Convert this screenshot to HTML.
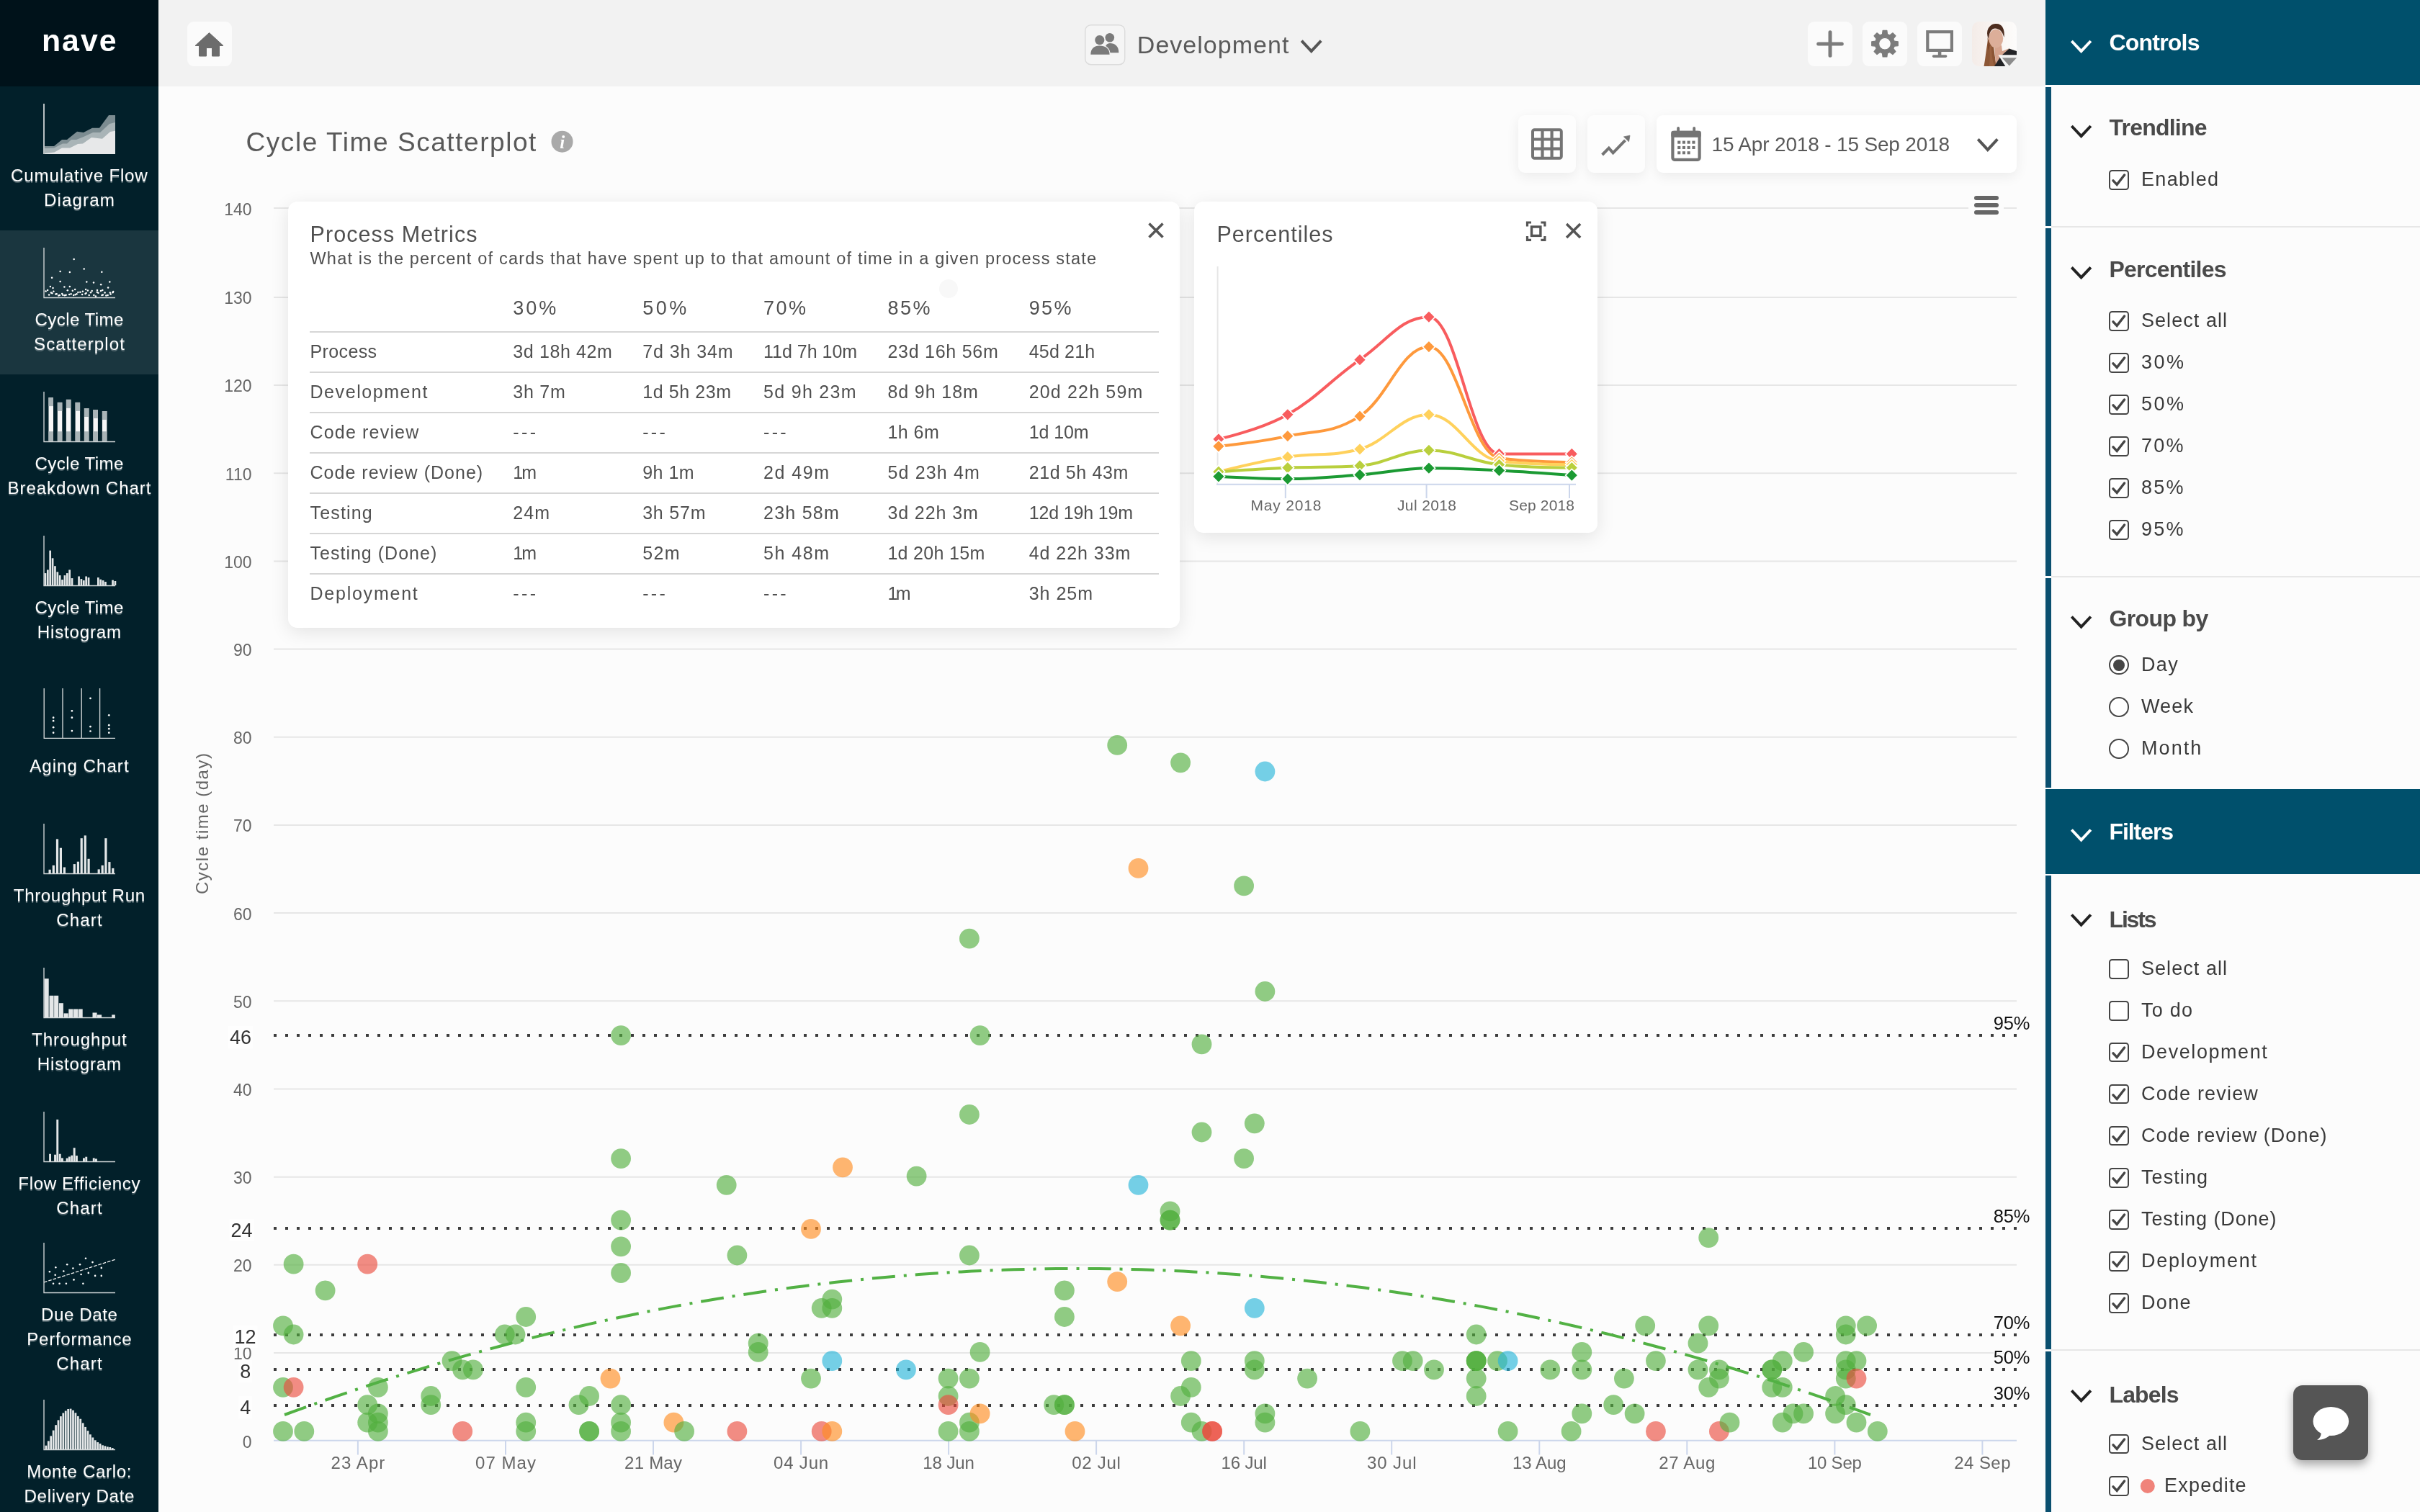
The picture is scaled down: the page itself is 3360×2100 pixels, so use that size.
<!DOCTYPE html><html><head><meta charset="utf-8"><title>Nave - Cycle Time Scatterplot</title><style>html,body{margin:0;padding:0;overflow:hidden}body{width:3360px;height:2100px;overflow:hidden;position:relative;background:#fcfcfc;font-family:"Liberation Sans",sans-serif}div{box-sizing:content-box}@media (max-width:1700px){#root{transform:scale(0.5);transform-origin:0 0}}</style></head><body><div id="root" style="position:absolute;left:0;top:0;width:3360px;height:2100px;will-change:transform">
<svg style="position:absolute;left:0;top:0" width="3360" height="2100" viewBox="0 0 3360 2100" font-family="Liberation Sans, sans-serif"><path d="M380 1879.0H2800M380 1756.8H2800M380 1634.7H2800M380 1512.5H2800M380 1390.3H2800M380 1268.1H2800M380 1145.9H2800M380 1023.8H2800M380 901.6H2800M380 779.4H2800M380 657.2H2800M380 535.0H2800M380 412.9H2800M380 289.0H2800" stroke="#e6e6e6" stroke-width="2" fill="none"/><path d="M380 2000.8H2800M496.9 2000.8V2020.5M702.0 2000.8V2020.5M907.0 2000.8V2020.5M1112.1 2000.8V2020.5M1317.1 2000.8V2020.5M1522.1 2000.8V2020.5M1727.2 2000.8V2020.5M1932.2 2000.8V2020.5M2137.3 2000.8V2020.5M2342.3 2000.8V2020.5M2547.4 2000.8V2020.5M2752.4 2000.8V2020.5" stroke="#ccd6eb" stroke-width="2" fill="none"/><text x="349.5" y="2010.6" font-size="23" fill="#666" text-anchor="end">0</text><text x="349.5" y="1888.4" font-size="23" fill="#666" text-anchor="end">10</text><text x="349.5" y="1766.2" font-size="23" fill="#666" text-anchor="end">20</text><text x="349.5" y="1644.1" font-size="23" fill="#666" text-anchor="end">30</text><text x="349.5" y="1521.9" font-size="23" fill="#666" text-anchor="end">40</text><text x="349.5" y="1399.7" font-size="23" fill="#666" text-anchor="end">50</text><text x="349.5" y="1277.5" font-size="23" fill="#666" text-anchor="end">60</text><text x="349.5" y="1155.3" font-size="23" fill="#666" text-anchor="end">70</text><text x="349.5" y="1033.2" font-size="23" fill="#666" text-anchor="end">80</text><text x="349.5" y="911.0" font-size="23" fill="#666" text-anchor="end">90</text><text x="349.5" y="788.8" font-size="23" fill="#666" text-anchor="end">100</text><text x="349.5" y="666.6" font-size="23" fill="#666" text-anchor="end">110</text><text x="349.5" y="544.4" font-size="23" fill="#666" text-anchor="end">120</text><text x="349.5" y="422.3" font-size="23" fill="#666" text-anchor="end">130</text><text x="349.5" y="298.6" font-size="23" fill="#666" text-anchor="end">140</text><text x="496.9" y="2040.3" font-size="24" fill="#666" text-anchor="middle" textLength="74.9" lengthAdjust="spacing">23 Apr</text><text x="702.0" y="2040.3" font-size="24" fill="#666" text-anchor="middle" textLength="83.9" lengthAdjust="spacing">07 May</text><text x="907.0" y="2040.3" font-size="24" fill="#666" text-anchor="middle" textLength="79.9" lengthAdjust="spacing">21 May</text><text x="1112.1" y="2040.3" font-size="24" fill="#666" text-anchor="middle" textLength="76.2" lengthAdjust="spacing">04 Jun</text><text x="1317.1" y="2040.3" font-size="24" fill="#666" text-anchor="middle" textLength="71.6" lengthAdjust="spacing">18 Jun</text><text x="1522.1" y="2040.3" font-size="24" fill="#666" text-anchor="middle" textLength="67.7" lengthAdjust="spacing">02 Jul</text><text x="1727.2" y="2040.3" font-size="24" fill="#666" text-anchor="middle" textLength="63.4" lengthAdjust="spacing">16 Jul</text><text x="1932.2" y="2040.3" font-size="24" fill="#666" text-anchor="middle" textLength="68.6" lengthAdjust="spacing">30 Jul</text><text x="2137.3" y="2040.3" font-size="24" fill="#666" text-anchor="middle" textLength="74.6" lengthAdjust="spacing">13 Aug</text><text x="2342.3" y="2040.3" font-size="24" fill="#666" text-anchor="middle" textLength="78.2" lengthAdjust="spacing">27 Aug</text><text x="2547.4" y="2040.3" font-size="24" fill="#666" text-anchor="middle" textLength="74.9" lengthAdjust="spacing">10 Sep</text><text x="2752.4" y="2040.3" font-size="24" fill="#666" text-anchor="middle" textLength="78.2" lengthAdjust="spacing">24 Sep</text><text transform="translate(288.5 1144) rotate(-90)" font-size="24" fill="#666" text-anchor="middle" textLength="196" lengthAdjust="spacing">Cycle time (day)</text><path d="M380 1438H2801" stroke="#3d3d3d" stroke-width="4" stroke-dasharray="4 12" fill="none"/><path d="M380 1706H2801" stroke="#3d3d3d" stroke-width="4" stroke-dasharray="4 12" fill="none"/><path d="M380 1854H2801" stroke="#3d3d3d" stroke-width="4" stroke-dasharray="4 12" fill="none"/><path d="M380 1902H2801" stroke="#3d3d3d" stroke-width="4" stroke-dasharray="4 12" fill="none"/><path d="M380 1952H2801" stroke="#3d3d3d" stroke-width="4" stroke-dasharray="4 12" fill="none"/><rect x="317.0" y="1425" width="34.0" height="31" fill="#fff" opacity="0.75"/><text x="334.0" y="1450.4" font-size="27" fill="#333" text-anchor="middle">46</text><text x="2818.5" y="1430.2" font-size="25.5" fill="#111" text-anchor="end" textLength="50.8" lengthAdjust="spacing" stroke="#fcfcfc" stroke-width="3" paint-order="stroke" stroke-linejoin="round">95%</text><rect x="318.6" y="1693" width="34.0" height="31" fill="#fff" opacity="0.75"/><text x="335.6" y="1718.4" font-size="27" fill="#333" text-anchor="middle">24</text><text x="2818.5" y="1698.2" font-size="25.5" fill="#111" text-anchor="end" textLength="50.8" lengthAdjust="spacing" stroke="#fcfcfc" stroke-width="3" paint-order="stroke" stroke-linejoin="round">85%</text><rect x="323.6" y="1841" width="34.0" height="31" fill="#fff" opacity="0.75"/><text x="340.6" y="1866.4" font-size="27" fill="#333" text-anchor="middle">12</text><text x="2818.5" y="1846.2" font-size="25.5" fill="#111" text-anchor="end" textLength="50.8" lengthAdjust="spacing" stroke="#fcfcfc" stroke-width="3" paint-order="stroke" stroke-linejoin="round">70%</text><rect x="331.3" y="1889" width="19.0" height="31" fill="#fff" opacity="0.75"/><text x="340.8" y="1914.4" font-size="27" fill="#333" text-anchor="middle">8</text><text x="2818.5" y="1894.2" font-size="25.5" fill="#111" text-anchor="end" textLength="50.8" lengthAdjust="spacing" stroke="#fcfcfc" stroke-width="3" paint-order="stroke" stroke-linejoin="round">50%</text><rect x="331.3" y="1939" width="19.0" height="31" fill="#fff" opacity="0.75"/><text x="340.8" y="1964.4" font-size="27" fill="#333" text-anchor="middle">4</text><text x="2818.5" y="1944.2" font-size="25.5" fill="#111" text-anchor="end" textLength="50.8" lengthAdjust="spacing" stroke="#fcfcfc" stroke-width="3" paint-order="stroke" stroke-linejoin="round">30%</text><circle cx="862.1" cy="1438.1" r="13.9" fill="#50ae3c" fill-opacity="0.63"/><circle cx="862.1" cy="1609.1" r="13.9" fill="#50ae3c" fill-opacity="0.63"/><circle cx="1008.7" cy="1645.8" r="13.9" fill="#50ae3c" fill-opacity="0.63"/><circle cx="862.1" cy="1694.6" r="13.9" fill="#50ae3c" fill-opacity="0.63"/><circle cx="862.1" cy="1731.3" r="13.9" fill="#50ae3c" fill-opacity="0.63"/><circle cx="1023.4" cy="1743.5" r="13.9" fill="#50ae3c" fill-opacity="0.63"/><circle cx="1756.4" cy="1377.0" r="13.9" fill="#50ae3c" fill-opacity="0.63"/><circle cx="1360.6" cy="1438.1" r="13.9" fill="#50ae3c" fill-opacity="0.63"/><circle cx="1668.5" cy="1450.3" r="13.9" fill="#50ae3c" fill-opacity="0.63"/><circle cx="1345.9" cy="1548.0" r="13.9" fill="#50ae3c" fill-opacity="0.63"/><circle cx="1741.8" cy="1560.3" r="13.9" fill="#50ae3c" fill-opacity="0.63"/><circle cx="1668.5" cy="1572.5" r="13.9" fill="#50ae3c" fill-opacity="0.63"/><circle cx="1727.1" cy="1609.1" r="13.9" fill="#50ae3c" fill-opacity="0.63"/><circle cx="1170.0" cy="1621.3" r="13.9" fill="#ff8c1e" fill-opacity="0.63"/><circle cx="1272.6" cy="1633.6" r="13.9" fill="#50ae3c" fill-opacity="0.63"/><circle cx="1580.5" cy="1645.8" r="13.9" fill="#25b4d9" fill-opacity="0.63"/><circle cx="1624.5" cy="1682.4" r="13.9" fill="#50ae3c" fill-opacity="0.63"/><circle cx="1624.5" cy="1694.6" r="13.9" fill="#50ae3c" fill-opacity="0.63"/><circle cx="1624.5" cy="1694.6" r="13.9" fill="#50ae3c" fill-opacity="0.63"/><circle cx="1126.0" cy="1706.9" r="13.9" fill="#ff8c1e" fill-opacity="0.63"/><circle cx="1345.9" cy="1743.5" r="13.9" fill="#50ae3c" fill-opacity="0.63"/><circle cx="2372.2" cy="1719.1" r="13.9" fill="#50ae3c" fill-opacity="0.63"/><circle cx="1551.2" cy="1034.9" r="13.9" fill="#50ae3c" fill-opacity="0.63"/><circle cx="1639.1" cy="1059.3" r="13.9" fill="#50ae3c" fill-opacity="0.63"/><circle cx="1756.4" cy="1071.5" r="13.9" fill="#25b4d9" fill-opacity="0.63"/><circle cx="1580.5" cy="1205.9" r="13.9" fill="#ff8c1e" fill-opacity="0.63"/><circle cx="1727.1" cy="1230.4" r="13.9" fill="#50ae3c" fill-opacity="0.63"/><circle cx="1345.9" cy="1303.7" r="13.9" fill="#50ae3c" fill-opacity="0.63"/><circle cx="407.6" cy="1755.7" r="13.9" fill="#50ae3c" fill-opacity="0.63"/><circle cx="510.2" cy="1755.7" r="13.9" fill="#eb4b3c" fill-opacity="0.63"/><circle cx="451.6" cy="1792.4" r="13.9" fill="#50ae3c" fill-opacity="0.63"/><circle cx="862.1" cy="1768.0" r="13.9" fill="#50ae3c" fill-opacity="0.63"/><circle cx="393.0" cy="1841.3" r="13.9" fill="#50ae3c" fill-opacity="0.63"/><circle cx="407.6" cy="1853.5" r="13.9" fill="#50ae3c" fill-opacity="0.63"/><circle cx="730.2" cy="1829.0" r="13.9" fill="#50ae3c" fill-opacity="0.63"/><circle cx="700.8" cy="1853.5" r="13.9" fill="#50ae3c" fill-opacity="0.63"/><circle cx="715.5" cy="1853.5" r="13.9" fill="#50ae3c" fill-opacity="0.63"/><circle cx="627.5" cy="1890.1" r="13.9" fill="#50ae3c" fill-opacity="0.63"/><circle cx="642.2" cy="1902.4" r="13.9" fill="#50ae3c" fill-opacity="0.63"/><circle cx="656.9" cy="1902.4" r="13.9" fill="#50ae3c" fill-opacity="0.63"/><circle cx="393.0" cy="1926.8" r="13.9" fill="#50ae3c" fill-opacity="0.63"/><circle cx="407.6" cy="1926.8" r="13.9" fill="#eb4b3c" fill-opacity="0.63"/><circle cx="524.9" cy="1926.8" r="13.9" fill="#50ae3c" fill-opacity="0.63"/><circle cx="730.2" cy="1926.8" r="13.9" fill="#50ae3c" fill-opacity="0.63"/><circle cx="847.5" cy="1914.6" r="13.9" fill="#ff8c1e" fill-opacity="0.63"/><circle cx="598.2" cy="1939.0" r="13.9" fill="#50ae3c" fill-opacity="0.63"/><circle cx="598.2" cy="1951.2" r="13.9" fill="#50ae3c" fill-opacity="0.63"/><circle cx="818.1" cy="1939.0" r="13.9" fill="#50ae3c" fill-opacity="0.63"/><circle cx="803.5" cy="1951.2" r="13.9" fill="#50ae3c" fill-opacity="0.63"/><circle cx="862.1" cy="1951.2" r="13.9" fill="#50ae3c" fill-opacity="0.63"/><circle cx="510.2" cy="1951.2" r="13.9" fill="#50ae3c" fill-opacity="0.63"/><circle cx="524.9" cy="1963.4" r="13.9" fill="#50ae3c" fill-opacity="0.63"/><circle cx="510.2" cy="1975.7" r="13.9" fill="#50ae3c" fill-opacity="0.63"/><circle cx="524.9" cy="1975.7" r="13.9" fill="#50ae3c" fill-opacity="0.63"/><circle cx="524.9" cy="1987.9" r="13.9" fill="#50ae3c" fill-opacity="0.63"/><circle cx="393.0" cy="1987.9" r="13.9" fill="#50ae3c" fill-opacity="0.63"/><circle cx="422.3" cy="1987.9" r="13.9" fill="#50ae3c" fill-opacity="0.63"/><circle cx="642.2" cy="1987.9" r="13.9" fill="#eb4b3c" fill-opacity="0.63"/><circle cx="730.2" cy="1975.7" r="13.9" fill="#50ae3c" fill-opacity="0.63"/><circle cx="730.2" cy="1987.9" r="13.9" fill="#50ae3c" fill-opacity="0.63"/><circle cx="818.1" cy="1987.9" r="13.9" fill="#50ae3c" fill-opacity="0.63"/><circle cx="818.1" cy="1987.9" r="13.9" fill="#50ae3c" fill-opacity="0.63"/><circle cx="862.1" cy="1975.7" r="13.9" fill="#50ae3c" fill-opacity="0.63"/><circle cx="862.1" cy="1987.9" r="13.9" fill="#50ae3c" fill-opacity="0.63"/><circle cx="935.4" cy="1975.7" r="13.9" fill="#ff8c1e" fill-opacity="0.63"/><circle cx="950.1" cy="1987.9" r="13.9" fill="#50ae3c" fill-opacity="0.63"/><circle cx="1023.4" cy="1987.9" r="13.9" fill="#eb4b3c" fill-opacity="0.63"/><circle cx="1052.7" cy="1865.7" r="13.9" fill="#50ae3c" fill-opacity="0.63"/><circle cx="1052.7" cy="1877.9" r="13.9" fill="#50ae3c" fill-opacity="0.63"/><circle cx="1155.3" cy="1804.6" r="13.9" fill="#50ae3c" fill-opacity="0.63"/><circle cx="1140.7" cy="1816.8" r="13.9" fill="#50ae3c" fill-opacity="0.63"/><circle cx="1155.3" cy="1816.8" r="13.9" fill="#50ae3c" fill-opacity="0.63"/><circle cx="1155.3" cy="1890.1" r="13.9" fill="#25b4d9" fill-opacity="0.63"/><circle cx="1126.0" cy="1914.6" r="13.9" fill="#50ae3c" fill-opacity="0.63"/><circle cx="1258.0" cy="1902.4" r="13.9" fill="#25b4d9" fill-opacity="0.63"/><circle cx="1140.7" cy="1987.9" r="13.9" fill="#eb4b3c" fill-opacity="0.63"/><circle cx="1155.3" cy="1987.9" r="13.9" fill="#ff8c1e" fill-opacity="0.63"/><circle cx="1316.6" cy="1914.6" r="13.9" fill="#50ae3c" fill-opacity="0.63"/><circle cx="1316.6" cy="1939.0" r="13.9" fill="#50ae3c" fill-opacity="0.63"/><circle cx="1316.6" cy="1951.2" r="13.9" fill="#eb4b3c" fill-opacity="0.63"/><circle cx="1316.6" cy="1987.9" r="13.9" fill="#50ae3c" fill-opacity="0.63"/><circle cx="1345.9" cy="1914.6" r="13.9" fill="#50ae3c" fill-opacity="0.63"/><circle cx="1360.6" cy="1877.9" r="13.9" fill="#50ae3c" fill-opacity="0.63"/><circle cx="1345.9" cy="1975.7" r="13.9" fill="#50ae3c" fill-opacity="0.63"/><circle cx="1360.6" cy="1963.4" r="13.9" fill="#ff8c1e" fill-opacity="0.63"/><circle cx="1345.9" cy="1987.9" r="13.9" fill="#50ae3c" fill-opacity="0.63"/><circle cx="1477.9" cy="1792.4" r="13.9" fill="#50ae3c" fill-opacity="0.63"/><circle cx="1477.9" cy="1829.0" r="13.9" fill="#50ae3c" fill-opacity="0.63"/><circle cx="1551.2" cy="1780.2" r="13.9" fill="#ff8c1e" fill-opacity="0.63"/><circle cx="1463.2" cy="1951.2" r="13.9" fill="#50ae3c" fill-opacity="0.63"/><circle cx="1477.9" cy="1951.2" r="13.9" fill="#50ae3c" fill-opacity="0.63"/><circle cx="1477.9" cy="1951.2" r="13.9" fill="#50ae3c" fill-opacity="0.63"/><circle cx="1492.5" cy="1987.9" r="13.9" fill="#ff8c1e" fill-opacity="0.63"/><circle cx="1639.1" cy="1841.3" r="13.9" fill="#ff8c1e" fill-opacity="0.63"/><circle cx="1653.8" cy="1890.1" r="13.9" fill="#50ae3c" fill-opacity="0.63"/><circle cx="1653.8" cy="1926.8" r="13.9" fill="#50ae3c" fill-opacity="0.63"/><circle cx="1639.1" cy="1939.0" r="13.9" fill="#50ae3c" fill-opacity="0.63"/><circle cx="1653.8" cy="1975.7" r="13.9" fill="#50ae3c" fill-opacity="0.63"/><circle cx="1668.5" cy="1987.9" r="13.9" fill="#50ae3c" fill-opacity="0.63"/><circle cx="1683.1" cy="1987.9" r="13.9" fill="#eb4b3c" fill-opacity="0.63"/><circle cx="1683.1" cy="1987.9" r="13.9" fill="#eb4b3c" fill-opacity="0.63"/><circle cx="1741.8" cy="1816.8" r="13.9" fill="#25b4d9" fill-opacity="0.63"/><circle cx="1741.8" cy="1890.1" r="13.9" fill="#50ae3c" fill-opacity="0.63"/><circle cx="1741.8" cy="1902.4" r="13.9" fill="#50ae3c" fill-opacity="0.63"/><circle cx="1756.4" cy="1963.4" r="13.9" fill="#50ae3c" fill-opacity="0.63"/><circle cx="1756.4" cy="1975.7" r="13.9" fill="#50ae3c" fill-opacity="0.63"/><circle cx="1815.1" cy="1914.6" r="13.9" fill="#50ae3c" fill-opacity="0.63"/><circle cx="1888.4" cy="1987.9" r="13.9" fill="#50ae3c" fill-opacity="0.63"/><circle cx="1947.0" cy="1890.1" r="13.9" fill="#50ae3c" fill-opacity="0.63"/><circle cx="1961.7" cy="1890.1" r="13.9" fill="#50ae3c" fill-opacity="0.63"/><circle cx="1991.0" cy="1902.4" r="13.9" fill="#50ae3c" fill-opacity="0.63"/><circle cx="2049.7" cy="1853.5" r="13.9" fill="#50ae3c" fill-opacity="0.63"/><circle cx="2049.7" cy="1890.1" r="13.9" fill="#50ae3c" fill-opacity="0.63"/><circle cx="2049.7" cy="1890.1" r="13.9" fill="#50ae3c" fill-opacity="0.63"/><circle cx="2049.7" cy="1890.1" r="13.9" fill="#50ae3c" fill-opacity="0.63"/><circle cx="2049.7" cy="1914.6" r="13.9" fill="#50ae3c" fill-opacity="0.63"/><circle cx="2049.7" cy="1939.0" r="13.9" fill="#50ae3c" fill-opacity="0.63"/><circle cx="2079.0" cy="1890.1" r="13.9" fill="#50ae3c" fill-opacity="0.63"/><circle cx="2093.6" cy="1890.1" r="13.9" fill="#25b4d9" fill-opacity="0.63"/><circle cx="2093.6" cy="1987.9" r="13.9" fill="#50ae3c" fill-opacity="0.63"/><circle cx="2152.3" cy="1902.4" r="13.9" fill="#50ae3c" fill-opacity="0.63"/><circle cx="2196.3" cy="1877.9" r="13.9" fill="#50ae3c" fill-opacity="0.63"/><circle cx="2196.3" cy="1902.4" r="13.9" fill="#50ae3c" fill-opacity="0.63"/><circle cx="2196.3" cy="1963.4" r="13.9" fill="#50ae3c" fill-opacity="0.63"/><circle cx="2181.6" cy="1987.9" r="13.9" fill="#50ae3c" fill-opacity="0.63"/><circle cx="2240.2" cy="1951.2" r="13.9" fill="#50ae3c" fill-opacity="0.63"/><circle cx="2254.9" cy="1914.6" r="13.9" fill="#50ae3c" fill-opacity="0.63"/><circle cx="2269.6" cy="1963.4" r="13.9" fill="#50ae3c" fill-opacity="0.63"/><circle cx="2284.2" cy="1841.3" r="13.9" fill="#50ae3c" fill-opacity="0.63"/><circle cx="2298.9" cy="1890.1" r="13.9" fill="#50ae3c" fill-opacity="0.63"/><circle cx="2298.9" cy="1987.9" r="13.9" fill="#eb4b3c" fill-opacity="0.63"/><circle cx="2357.5" cy="1865.7" r="13.9" fill="#50ae3c" fill-opacity="0.63"/><circle cx="2357.5" cy="1902.4" r="13.9" fill="#50ae3c" fill-opacity="0.63"/><circle cx="2372.2" cy="1841.3" r="13.9" fill="#50ae3c" fill-opacity="0.63"/><circle cx="2372.2" cy="1926.8" r="13.9" fill="#50ae3c" fill-opacity="0.63"/><circle cx="2386.9" cy="1902.4" r="13.9" fill="#50ae3c" fill-opacity="0.63"/><circle cx="2386.9" cy="1914.6" r="13.9" fill="#50ae3c" fill-opacity="0.63"/><circle cx="2386.9" cy="1987.9" r="13.9" fill="#eb4b3c" fill-opacity="0.63"/><circle cx="2401.5" cy="1975.7" r="13.9" fill="#50ae3c" fill-opacity="0.63"/><circle cx="2460.2" cy="1902.4" r="13.9" fill="#50ae3c" fill-opacity="0.63"/><circle cx="2460.2" cy="1902.4" r="13.9" fill="#50ae3c" fill-opacity="0.63"/><circle cx="2460.2" cy="1926.8" r="13.9" fill="#50ae3c" fill-opacity="0.63"/><circle cx="2474.8" cy="1890.1" r="13.9" fill="#50ae3c" fill-opacity="0.63"/><circle cx="2474.8" cy="1926.8" r="13.9" fill="#50ae3c" fill-opacity="0.63"/><circle cx="2474.8" cy="1975.7" r="13.9" fill="#50ae3c" fill-opacity="0.63"/><circle cx="2489.5" cy="1963.4" r="13.9" fill="#50ae3c" fill-opacity="0.63"/><circle cx="2504.1" cy="1877.9" r="13.9" fill="#50ae3c" fill-opacity="0.63"/><circle cx="2504.1" cy="1963.4" r="13.9" fill="#50ae3c" fill-opacity="0.63"/><circle cx="2548.1" cy="1939.0" r="13.9" fill="#50ae3c" fill-opacity="0.63"/><circle cx="2548.1" cy="1963.4" r="13.9" fill="#50ae3c" fill-opacity="0.63"/><circle cx="2562.8" cy="1841.3" r="13.9" fill="#50ae3c" fill-opacity="0.63"/><circle cx="2562.8" cy="1853.5" r="13.9" fill="#50ae3c" fill-opacity="0.63"/><circle cx="2562.8" cy="1890.1" r="13.9" fill="#50ae3c" fill-opacity="0.63"/><circle cx="2562.8" cy="1902.4" r="13.9" fill="#50ae3c" fill-opacity="0.63"/><circle cx="2562.8" cy="1914.6" r="13.9" fill="#50ae3c" fill-opacity="0.63"/><circle cx="2562.8" cy="1951.2" r="13.9" fill="#50ae3c" fill-opacity="0.63"/><circle cx="2577.5" cy="1890.1" r="13.9" fill="#50ae3c" fill-opacity="0.63"/><circle cx="2577.5" cy="1914.6" r="13.9" fill="#eb4b3c" fill-opacity="0.63"/><circle cx="2577.5" cy="1975.7" r="13.9" fill="#50ae3c" fill-opacity="0.63"/><circle cx="2592.1" cy="1841.3" r="13.9" fill="#50ae3c" fill-opacity="0.63"/><circle cx="2606.8" cy="1987.9" r="13.9" fill="#50ae3c" fill-opacity="0.63"/><path d="M395.0 1965.0 L409.7 1959.7 L424.4 1954.4 L439.0 1949.1 L453.7 1944.0 L468.4 1938.9 L483.1 1933.9 L497.8 1928.9 L512.4 1924.0 L527.1 1919.2 L541.8 1914.5 L556.5 1909.9 L571.2 1905.3 L585.8 1900.8 L600.5 1896.3 L615.2 1891.9 L629.9 1887.7 L644.6 1883.4 L659.2 1879.3 L673.9 1875.2 L688.6 1871.2 L703.3 1867.3 L718.0 1863.4 L732.6 1859.6 L747.3 1855.9 L762.0 1852.2 L776.7 1848.7 L791.4 1845.2 L806.0 1841.7 L820.7 1838.4 L835.4 1835.1 L850.1 1831.9 L864.8 1828.7 L879.4 1825.7 L894.1 1822.7 L908.8 1819.8 L923.5 1816.9 L938.2 1814.1 L952.8 1811.4 L967.5 1808.8 L982.2 1806.2 L996.9 1803.7 L1011.6 1801.3 L1026.2 1799.0 L1040.9 1796.7 L1055.6 1794.5 L1070.3 1792.4 L1085.0 1790.3 L1099.6 1788.3 L1114.3 1786.4 L1129.0 1784.6 L1143.7 1782.8 L1158.4 1781.1 L1173.0 1779.5 L1187.7 1777.9 L1202.4 1776.4 L1217.1 1775.0 L1231.8 1773.7 L1246.4 1772.4 L1261.1 1771.2 L1275.8 1770.1 L1290.5 1769.1 L1305.2 1768.1 L1319.8 1767.2 L1334.5 1766.4 L1349.2 1765.6 L1363.9 1764.9 L1378.6 1764.3 L1393.2 1763.8 L1407.9 1763.3 L1422.6 1762.9 L1437.3 1762.6 L1452.0 1762.3 L1466.6 1762.1 L1481.3 1762.0 L1496.0 1762.0 L1510.7 1762.0 L1525.4 1762.1 L1540.0 1762.3 L1554.7 1762.6 L1569.4 1762.9 L1584.1 1763.3 L1598.8 1763.8 L1613.4 1764.3 L1628.1 1764.9 L1642.8 1765.6 L1657.5 1766.4 L1672.2 1767.2 L1686.8 1768.1 L1701.5 1769.1 L1716.2 1770.1 L1730.9 1771.2 L1745.6 1772.4 L1760.2 1773.7 L1774.9 1775.0 L1789.6 1776.4 L1804.3 1777.9 L1819.0 1779.5 L1833.6 1781.1 L1848.3 1782.8 L1863.0 1784.6 L1877.7 1786.4 L1892.4 1788.3 L1907.0 1790.3 L1921.7 1792.4 L1936.4 1794.5 L1951.1 1796.7 L1965.8 1799.0 L1980.4 1801.3 L1995.1 1803.7 L2009.8 1806.2 L2024.5 1808.8 L2039.2 1811.4 L2053.8 1814.1 L2068.5 1816.9 L2083.2 1819.8 L2097.9 1822.7 L2112.6 1825.7 L2127.2 1828.7 L2141.9 1831.9 L2156.6 1835.1 L2171.3 1838.4 L2186.0 1841.7 L2200.6 1845.2 L2215.3 1848.7 L2230.0 1852.2 L2244.7 1855.9 L2259.4 1859.6 L2274.0 1863.4 L2288.7 1867.3 L2303.4 1871.2 L2318.1 1875.2 L2332.8 1879.3 L2347.4 1883.4 L2362.1 1887.7 L2376.8 1891.9 L2391.5 1896.3 L2406.2 1900.8 L2420.8 1905.3 L2435.5 1909.9 L2450.2 1914.5 L2464.9 1919.2 L2479.6 1924.0 L2494.2 1928.9 L2508.9 1933.9 L2523.6 1938.9 L2538.3 1944.0 L2553.0 1949.1 L2567.6 1954.4 L2582.3 1959.7 L2597.0 1965.0" stroke="#52b144" stroke-width="4" stroke-dasharray="32 12 4 12" fill="none"/></svg>
<div style="position:absolute;left:220px;top:0px;width:2620px;height:120px;background:#f2f2f2"></div><div style="position:absolute;left:260px;top:30px;width:62px;height:62px;background:#fbfbfb;border-radius:9px;"></div><div style="position:absolute;left:2510px;top:30px;width:62px;height:62px;background:#fbfbfb;border-radius:9px;"></div><div style="position:absolute;left:2586px;top:30px;width:62px;height:62px;background:#fbfbfb;border-radius:9px;"></div><div style="position:absolute;left:2662px;top:30px;width:62px;height:62px;background:#fbfbfb;border-radius:9px;"></div><div style="position:absolute;left:2738px;top:30px;width:62px;height:62px;border-radius:10px;overflow:hidden;background:#f6f0ed"><svg width="62" height="62" viewBox="0 0 62 62"><defs><linearGradient id="avbg" x1="0" x2="1" y1="0" y2="0"><stop offset="0" stop-color="#f4ece8"/><stop offset="1" stop-color="#fdfcfb"/></linearGradient></defs><rect width="62" height="62" fill="url(#avbg)"/><path d="M23 22 C20 34 19 50 16.5 62 L34 62 C32 52 31 42 30 34Z" fill="#8c5635"/><path d="M31 34 L41 33 L42 41 L52 37 L40 49 L33 60 Z" fill="#d6a48e"/><ellipse cx="33.2" cy="23.5" rx="10" ry="13" fill="#dcae99"/><path d="M21.5 20 C19 8 28 2 34 3 C42 3 46 11 44.5 22 C42 13 38 10 32 9.5 C27 10 24 14 23 24Z" fill="#4d2c1e"/><path d="M21.5 18 C22 26 23 30 25 34 L22 40 Z" fill="#7a4528"/><path d="M31 62 L39.7 48.2 L51.6 37.6 L62 41 L62 62Z" fill="#222326"/><path d="M27 34 C27 44 28 54 31 62 L24 62 C25 52 25 42 24.5 34Z" fill="#9a6240"/></svg></div><svg style="position:absolute;left:2738px;top:30px" width="62" height="62" viewBox="0 0 62 62"><path d="M36.4 46.2 L62 46.2 L62 62 L46.3 62Z" fill="#f3f3f3"/><path d="M41.7 50.2 L62 50.2 L51.8 61.4Z" fill="#8c8c8c"/></svg><div style="position:absolute;top:45.1px;font-size:34px;line-height:1;color:#5a5a5a;white-space:nowrap;letter-spacing:1.03px;left:1578.8px;">Development</div><svg style="position:absolute;left:0;top:0" width="3360" height="260" viewBox="0 0 3360 260"><path d="M290.5 45.5 L310 63.5 L304.5 63.5 L304.5 78 L294.5 78 L294.5 66.5 L286.5 66.5 L286.5 78 L276.5 78 L276.5 63.5 L271 63.5 Z" fill="#6c6c6c" stroke="#6c6c6c" stroke-width="1" stroke-linejoin="round"/><rect x="1506.7" y="34.7" width="55" height="55" rx="8" fill="#f5f5f5" stroke="#dcdcdc" stroke-width="1.5"/><circle cx="1540.8" cy="52.3" r="6.3" fill="#7b7b7b"/><path d="M1533.5 73.2 C1533.5 63 1537 60 1541 60 C1548 60 1553.3 64 1553.3 73.2Z" fill="#7b7b7b"/><circle cx="1526.8" cy="55.6" r="7.6" fill="#f5f5f5"/><path d="M1513 77 C1513 66 1519 62 1527 62 C1535 62 1541.8 66 1541.8 77Z" fill="#f5f5f5"/><circle cx="1526.8" cy="55.6" r="6.6" fill="#7b7b7b"/><path d="M1514.3 75.8 C1514.3 67 1520 63.6 1527 63.6 C1534 63.6 1540.6 67 1540.6 75.8Z" fill="#7b7b7b"/><path d="M1807.2 56.55 L1820.7 71.05 L1834.2 56.55" fill="none" stroke="#555" stroke-width="4" stroke-linecap="butt" stroke-linejoin="miter"/><path d="M2524.7 61 H2557.3 M2541 44.7 V77.3" stroke="#7c7c7c" stroke-width="5" stroke-linecap="round"/><path d="M2613.44 47.57 L2614.14 42.42 L2619.86 42.42 L2620.56 47.57 L2623.76 48.90 L2627.91 45.76 L2631.94 49.79 L2628.80 53.94 L2630.13 57.14 L2635.28 57.84 L2635.28 63.56 L2630.13 64.26 L2628.80 67.46 L2631.94 71.61 L2627.91 75.64 L2623.76 72.50 L2620.56 73.83 L2619.86 78.98 L2614.14 78.98 L2613.44 73.83 L2610.24 72.50 L2606.09 75.64 L2602.06 71.61 L2605.20 67.46 L2603.87 64.26 L2598.72 63.56 L2598.72 57.84 L2603.87 57.14 L2605.20 53.94 L2602.06 49.79 L2606.09 45.76 L2610.24 48.90Z M2608.6 60.7 a8.4 8.4 0 1 0 16.8 0 a8.4 8.4 0 1 0 -16.8 0Z" fill="#7c7c7c" fill-rule="evenodd" stroke="#7c7c7c" stroke-width="1.2" stroke-linejoin="round"/><rect x="2676.3" y="44.2" width="33.6" height="25.7" fill="none" stroke="#7c7c7c" stroke-width="4.2"/><path d="M2693.1 71 V77" stroke="#7c7c7c" stroke-width="4.5" fill="none"/><rect x="2682.8" y="76.2" width="20.6" height="3.7" rx="1.8" fill="#7c7c7c"/></svg>
<div style="position:absolute;left:2108px;top:160px;width:80px;height:80px;background:#fdfdfd;border-radius:9px;box-shadow:0 5px 18px rgba(0,0,0,0.07);"></div><div style="position:absolute;left:2204px;top:160px;width:80px;height:80px;background:#fdfdfd;border-radius:9px;box-shadow:0 5px 18px rgba(0,0,0,0.07);"></div><div style="position:absolute;left:2300px;top:160px;width:500px;height:80px;background:#fff;border-radius:9px;box-shadow:0 5px 18px rgba(0,0,0,0.07);"></div><div style="position:absolute;top:178.7px;font-size:37px;line-height:1;color:#595959;white-space:nowrap;letter-spacing:1.56px;left:341.5px;">Cycle Time Scatterplot</div><div style="position:absolute;top:186.9px;font-size:28px;line-height:1;color:#595959;white-space:nowrap;letter-spacing:-0.17px;left:2376.5px;">15 Apr 2018 - 15 Sep 2018</div><svg style="position:absolute;left:0;top:0" width="3360" height="300" viewBox="0 0 3360 300"><circle cx="780.5" cy="196.7" r="15" fill="#a9a9a9"/><text x="780.7" y="205.5" font-family="Liberation Serif" font-style="italic" font-weight="bold" font-size="25" fill="#fff" text-anchor="middle">i</text><rect x="2128" y="180.2" width="39.8" height="39.6" rx="2.5" fill="none" stroke="#747474" stroke-width="4"/><path d="M2141.5 180 V220 M2154.6 180 V220 M2128 193.5 H2168 M2128 206.7 H2168" stroke="#747474" stroke-width="4.2"/><path d="M2224.6 215 L2233.8 205.6 L2239.6 212.3 L2256.5 194.8" fill="none" stroke="#747474" stroke-width="4" stroke-linejoin="miter"/><path d="M2263 188.2 L2254.5 189.9 L2261.5 196.8 Z" fill="#747474" stroke="#747474" stroke-width="0.8" stroke-linejoin="round"/><rect x="2322.4" y="183.8" width="37.2" height="38" rx="2.5" fill="none" stroke="#747474" stroke-width="4.2"/><rect x="2320.3" y="181.7" width="41.5" height="9" rx="2.5" fill="#747474"/><path d="M2330.1 178 V185 M2352.2 178 V185" stroke="#747474" stroke-width="3.8" stroke-linecap="round"/><rect x="2329.2" y="195.6" width="4.1" height="4.1" fill="#747474"/><rect x="2335.9" y="195.6" width="4.1" height="4.1" fill="#747474"/><rect x="2342.6" y="195.6" width="4.1" height="4.1" fill="#747474"/><rect x="2349.4" y="195.6" width="4.1" height="4.1" fill="#747474"/><rect x="2329.2" y="202.9" width="4.1" height="4.1" fill="#747474"/><rect x="2335.9" y="202.9" width="4.1" height="4.1" fill="#747474"/><rect x="2342.6" y="202.9" width="4.1" height="4.1" fill="#747474"/><rect x="2349.4" y="202.9" width="4.1" height="4.1" fill="#747474"/><rect x="2329.2" y="210.2" width="4.1" height="4.1" fill="#747474"/><rect x="2335.9" y="210.2" width="4.1" height="4.1" fill="#747474"/><rect x="2342.6" y="210.2" width="4.1" height="4.1" fill="#747474"/><path d="M2746.3 193.45 L2759.8 207.95 L2773.3 193.45" fill="none" stroke="#555" stroke-width="4" stroke-linecap="butt" stroke-linejoin="miter"/><rect x="2733" y="268" width="49" height="34" fill="#fcfcfc"/><rect x="2741" y="272.1" width="34" height="6" rx="3" fill="#666"/><rect x="2741" y="282" width="34" height="6" rx="3" fill="#666"/><rect x="2741" y="292" width="34" height="6" rx="3" fill="#666"/></svg>
<div style="position:absolute;left:400px;top:280px;width:1238px;height:592px;background:#fff;border-radius:13px;box-shadow:0 6px 26px rgba(0,0,0,0.10)"></div><div style="position:absolute;left:1303.5px;top:387.5px;width:26px;height:26px;border-radius:50%;background:#f8f8f8"></div><div style="position:absolute;top:309.8px;font-size:30.5px;line-height:1;color:#505050;white-space:nowrap;letter-spacing:1.08px;left:430.5px;">Process Metrics</div><div style="position:absolute;top:348.1px;font-size:23.5px;line-height:1;color:#505050;white-space:nowrap;letter-spacing:1.19px;left:430.5px;">What is the percent of cards that have spent up to that amount of time in a given process state</div><div style="position:absolute;top:415.1px;font-size:27px;line-height:1;color:#505050;white-space:nowrap;letter-spacing:2.98px;left:712.3px;">30%</div><div style="position:absolute;top:415.1px;font-size:27px;line-height:1;color:#505050;white-space:nowrap;letter-spacing:3.48px;left:892.2px;">50%</div><div style="position:absolute;top:415.1px;font-size:27px;line-height:1;color:#505050;white-space:nowrap;letter-spacing:2.48px;left:1060.0px;">70%</div><div style="position:absolute;top:415.1px;font-size:27px;line-height:1;color:#505050;white-space:nowrap;letter-spacing:2.48px;left:1232.4px;">85%</div><div style="position:absolute;top:415.1px;font-size:27px;line-height:1;color:#505050;white-space:nowrap;letter-spacing:2.33px;left:1428.7px;">95%</div><div style="position:absolute;left:430px;top:460px;width:1179px;height:2px;background:#d6d6d6"></div><div style="position:absolute;left:430px;top:516px;width:1179px;height:2px;background:#d6d6d6"></div><div style="position:absolute;left:430px;top:572px;width:1179px;height:2px;background:#d6d6d6"></div><div style="position:absolute;left:430px;top:628px;width:1179px;height:2px;background:#d6d6d6"></div><div style="position:absolute;left:430px;top:684px;width:1179px;height:2px;background:#d6d6d6"></div><div style="position:absolute;left:430px;top:740px;width:1179px;height:2px;background:#d6d6d6"></div><div style="position:absolute;left:430px;top:796px;width:1179px;height:2px;background:#d6d6d6"></div><div style="position:absolute;top:476.4px;font-size:25px;line-height:1;color:#505050;white-space:nowrap;letter-spacing:0.38px;left:430.5px;">Process</div><div style="position:absolute;top:476.4px;font-size:25px;line-height:1;color:#505050;white-space:nowrap;letter-spacing:0.62px;left:712.3px;">3d 18h 42m</div><div style="position:absolute;top:476.4px;font-size:25px;line-height:1;color:#505050;white-space:nowrap;letter-spacing:0.91px;left:892.2px;">7d 3h 34m</div><div style="position:absolute;top:476.4px;font-size:25px;line-height:1;color:#505050;white-space:nowrap;left:1060.0px;">11d 7h 10m</div><div style="position:absolute;top:476.4px;font-size:25px;line-height:1;color:#505050;white-space:nowrap;letter-spacing:0.74px;left:1232.4px;">23d 16h 56m</div><div style="position:absolute;top:476.4px;font-size:25px;line-height:1;color:#505050;white-space:nowrap;letter-spacing:0.19px;left:1428.7px;">45d 21h</div><div style="position:absolute;top:532.4px;font-size:25px;line-height:1;color:#505050;white-space:nowrap;letter-spacing:1.57px;left:430.5px;">Development</div><div style="position:absolute;top:532.4px;font-size:25px;line-height:1;color:#505050;white-space:nowrap;letter-spacing:0.75px;left:712.3px;">3h 7m</div><div style="position:absolute;top:532.4px;font-size:25px;line-height:1;color:#505050;white-space:nowrap;letter-spacing:0.58px;left:892.2px;">1d 5h 23m</div><div style="position:absolute;top:532.4px;font-size:25px;line-height:1;color:#505050;white-space:nowrap;letter-spacing:1.31px;left:1060.0px;">5d 9h 23m</div><div style="position:absolute;top:532.4px;font-size:25px;line-height:1;color:#505050;white-space:nowrap;letter-spacing:0.91px;left:1232.4px;">8d 9h 18m</div><div style="position:absolute;top:532.4px;font-size:25px;line-height:1;color:#505050;white-space:nowrap;letter-spacing:1.17px;left:1428.7px;">20d 22h 59m</div><div style="position:absolute;top:588.4px;font-size:25px;line-height:1;color:#505050;white-space:nowrap;letter-spacing:1.18px;left:430.5px;">Code review</div><div style="position:absolute;top:588.4px;font-size:25px;line-height:1;color:#505050;white-space:nowrap;letter-spacing:3.36px;left:712.3px;">---</div><div style="position:absolute;top:588.4px;font-size:25px;line-height:1;color:#505050;white-space:nowrap;letter-spacing:3.36px;left:892.2px;">---</div><div style="position:absolute;top:588.4px;font-size:25px;line-height:1;color:#505050;white-space:nowrap;letter-spacing:3.36px;left:1060.0px;">---</div><div style="position:absolute;top:588.4px;font-size:25px;line-height:1;color:#505050;white-space:nowrap;letter-spacing:0.48px;left:1232.4px;">1h 6m</div><div style="position:absolute;top:588.4px;font-size:25px;line-height:1;color:#505050;white-space:nowrap;letter-spacing:-0.08px;left:1428.7px;">1d 10m</div><div style="position:absolute;top:644.4px;font-size:25px;line-height:1;color:#505050;white-space:nowrap;letter-spacing:1.02px;left:430.5px;">Code review (Done)</div><div style="position:absolute;top:644.4px;font-size:25px;line-height:1;color:#505050;white-space:nowrap;letter-spacing:-1.93px;left:712.3px;">1m</div><div style="position:absolute;top:644.4px;font-size:25px;line-height:1;color:#505050;white-space:nowrap;letter-spacing:0.48px;left:892.2px;">9h 1m</div><div style="position:absolute;top:644.4px;font-size:25px;line-height:1;color:#505050;white-space:nowrap;letter-spacing:1.52px;left:1060.0px;">2d 49m</div><div style="position:absolute;top:644.4px;font-size:25px;line-height:1;color:#505050;white-space:nowrap;letter-spacing:1.17px;left:1232.4px;">5d 23h 4m</div><div style="position:absolute;top:644.4px;font-size:25px;line-height:1;color:#505050;white-space:nowrap;letter-spacing:0.62px;left:1428.7px;">21d 5h 43m</div><div style="position:absolute;top:700.4px;font-size:25px;line-height:1;color:#505050;white-space:nowrap;letter-spacing:1.16px;left:430.5px;">Testing</div><div style="position:absolute;top:700.4px;font-size:25px;line-height:1;color:#505050;white-space:nowrap;letter-spacing:1.08px;left:712.3px;">24m</div><div style="position:absolute;top:700.4px;font-size:25px;line-height:1;color:#505050;white-space:nowrap;letter-spacing:0.78px;left:892.2px;">3h 57m</div><div style="position:absolute;top:700.4px;font-size:25px;line-height:1;color:#505050;white-space:nowrap;letter-spacing:1.25px;left:1060.0px;">23h 58m</div><div style="position:absolute;top:700.4px;font-size:25px;line-height:1;color:#505050;white-space:nowrap;letter-spacing:0.91px;left:1232.4px;">3d 22h 3m</div><div style="position:absolute;top:700.4px;font-size:25px;line-height:1;color:#505050;white-space:nowrap;letter-spacing:-0.16px;left:1428.7px;">12d 19h 19m</div><div style="position:absolute;top:756.4px;font-size:25px;line-height:1;color:#505050;white-space:nowrap;letter-spacing:1.01px;left:430.5px;">Testing (Done)</div><div style="position:absolute;top:756.4px;font-size:25px;line-height:1;color:#505050;white-space:nowrap;letter-spacing:-1.93px;left:712.3px;">1m</div><div style="position:absolute;top:756.4px;font-size:25px;line-height:1;color:#505050;white-space:nowrap;letter-spacing:1.33px;left:892.2px;">52m</div><div style="position:absolute;top:756.4px;font-size:25px;line-height:1;color:#505050;white-space:nowrap;letter-spacing:1.52px;left:1060.0px;">5h 48m</div><div style="position:absolute;top:756.4px;font-size:25px;line-height:1;color:#505050;white-space:nowrap;letter-spacing:0.32px;left:1232.4px;">1d 20h 15m</div><div style="position:absolute;top:756.4px;font-size:25px;line-height:1;color:#505050;white-space:nowrap;letter-spacing:0.96px;left:1428.7px;">4d 22h 33m</div><div style="position:absolute;top:812.4px;font-size:25px;line-height:1;color:#505050;white-space:nowrap;letter-spacing:1.76px;left:430.5px;">Deployment</div><div style="position:absolute;top:812.4px;font-size:25px;line-height:1;color:#505050;white-space:nowrap;letter-spacing:3.36px;left:712.3px;">---</div><div style="position:absolute;top:812.4px;font-size:25px;line-height:1;color:#505050;white-space:nowrap;letter-spacing:3.36px;left:892.2px;">---</div><div style="position:absolute;top:812.4px;font-size:25px;line-height:1;color:#505050;white-space:nowrap;letter-spacing:3.36px;left:1060.0px;">---</div><div style="position:absolute;top:812.4px;font-size:25px;line-height:1;color:#505050;white-space:nowrap;letter-spacing:-2.43px;left:1232.4px;">1m</div><div style="position:absolute;top:812.4px;font-size:25px;line-height:1;color:#505050;white-space:nowrap;letter-spacing:1.00px;left:1428.7px;">3h 25m</div><svg style="position:absolute;left:1580px;top:296px" width="50" height="50" viewBox="1580 296 50 50"><path d="M1595.5 310.5L1614.5 329.5M1614.5 310.5L1595.5 329.5" stroke="#555" stroke-width="3.6" fill="none"/></svg>
<div style="position:absolute;left:1658px;top:280px;width:560px;height:460px;background:#fff;border-radius:13px;box-shadow:0 6px 26px rgba(0,0,0,0.10)"></div><div style="position:absolute;top:310.2px;font-size:30.5px;line-height:1;color:#505050;white-space:nowrap;letter-spacing:1.01px;left:1689.5px;">Percentiles</div><svg style="position:absolute;left:1658px;top:280px" width="560" height="460" viewBox="1658 280 560 460" font-family="Liberation Sans, sans-serif"><rect x="2126.5" y="315.0" width="12.4" height="12.4" fill="none" stroke="#555" stroke-width="3.4"/><path d="M2120.5 314.5V309.0H2126.0" fill="none" stroke="#555" stroke-width="3.2"/><path d="M2144.8999999999996 314.5V309.0H2139.3999999999996" fill="none" stroke="#555" stroke-width="3.2"/><path d="M2144.8999999999996 327.9V333.4H2139.3999999999996" fill="none" stroke="#555" stroke-width="3.2"/><path d="M2120.5 327.9V333.4H2126.0" fill="none" stroke="#555" stroke-width="3.2"/><path d="M2175.1 311.0L2194.1 330.0M2194.1 311.0L2175.1 330.0" stroke="#555" stroke-width="3.6" fill="none"/><path d="M1690.6 370V672.7" stroke="#e6e6e6" stroke-width="2"/><path d="M1689 672.7H2188M1784.8 672.7V692M1980.6 672.7V692M2179 672.7V692" stroke="#ccd6eb" stroke-width="2" fill="none"/><text x="1785.5" y="708.7" font-size="21" fill="#666" text-anchor="middle" textLength="98" lengthAdjust="spacing">May 2018</text><text x="1981" y="708.7" font-size="21" fill="#666" text-anchor="middle" textLength="82" lengthAdjust="spacing">Jul 2018</text><text x="2186" y="708.7" font-size="21" fill="#666" text-anchor="end" textLength="91" lengthAdjust="spacing">Sep 2018</text><path d="M1691.9 609.9 C1691.9 609.9 1749.4 597.4 1787.8 575.8 C1827.9 553.3 1847.9 527.4 1888.0 499.7 C1926.4 473.2 1945.5 440.2 1983.9 440.2 C2022.9 440.2 2042.5 630.4 2081.5 630.4 C2121.8 630.4 2182.3 630.4 2182.3 630.4" fill="none" stroke="#f85c5e" stroke-width="4" stroke-linecap="round" stroke-linejoin="round"/><path d="M1691.9 601.1999999999999L1700.6000000000001 609.9L1691.9 618.6L1683.2 609.9Z" fill="#f85c5e" stroke="#fff" stroke-width="1.6"/><path d="M1787.8 567.0999999999999L1796.5 575.8L1787.8 584.5L1779.1 575.8Z" fill="#f85c5e" stroke="#fff" stroke-width="1.6"/><path d="M1888 491.0L1896.7 499.7L1888 508.4L1879.3 499.7Z" fill="#f85c5e" stroke="#fff" stroke-width="1.6"/><path d="M1983.9 431.5L1992.6000000000001 440.2L1983.9 448.9L1975.2 440.2Z" fill="#f85c5e" stroke="#fff" stroke-width="1.6"/><path d="M2081.5 621.6999999999999L2090.2 630.4L2081.5 639.1L2072.8 630.4Z" fill="#f85c5e" stroke="#fff" stroke-width="1.6"/><path d="M2182.3 621.6999999999999L2191.0 630.4L2182.3 639.1L2173.6000000000004 630.4Z" fill="#f85c5e" stroke="#fff" stroke-width="1.6"/><path d="M1691.9 619.8 C1691.9 619.8 1749.4 613.8 1787.8 605.6 C1827.9 597.1 1847.9 603.4 1888.0 578.1 C1926.4 553.8 1945.5 481.6 1983.9 481.6 C2022.9 481.6 2042.5 630.7 2081.5 636.3 C2121.8 641.9 2182.3 641.9 2182.3 641.9" fill="none" stroke="#fe993c" stroke-width="4" stroke-linecap="round" stroke-linejoin="round"/><path d="M1691.9 611.0999999999999L1700.6000000000001 619.8L1691.9 628.5L1683.2 619.8Z" fill="#fe993c" stroke="#fff" stroke-width="1.6"/><path d="M1787.8 596.9L1796.5 605.6L1787.8 614.3000000000001L1779.1 605.6Z" fill="#fe993c" stroke="#fff" stroke-width="1.6"/><path d="M1888 569.4L1896.7 578.1L1888 586.8000000000001L1879.3 578.1Z" fill="#fe993c" stroke="#fff" stroke-width="1.6"/><path d="M1983.9 472.90000000000003L1992.6000000000001 481.6L1983.9 490.3L1975.2 481.6Z" fill="#fe993c" stroke="#fff" stroke-width="1.6"/><path d="M2081.5 627.5999999999999L2090.2 636.3L2081.5 645.0L2072.8 636.3Z" fill="#fe993c" stroke="#fff" stroke-width="1.6"/><path d="M2182.3 633.1999999999999L2191.0 641.9L2182.3 650.6L2173.6000000000004 641.9Z" fill="#fe993c" stroke="#fff" stroke-width="1.6"/><path d="M1691.9 655.2 C1691.9 655.2 1749.4 640.8 1787.8 634.7 C1827.9 628.3 1847.9 634.7 1888.0 623.8 C1926.4 612.9 1945.5 575.8 1983.9 575.8 C2022.9 575.8 2042.5 635.3 2081.5 640.3 C2121.8 645.3 2182.3 645.3 2182.3 645.3" fill="none" stroke="#ffd15c" stroke-width="4" stroke-linecap="round" stroke-linejoin="round"/><path d="M1691.9 646.5L1700.6000000000001 655.2L1691.9 663.9000000000001L1683.2 655.2Z" fill="#ffd15c" stroke="#fff" stroke-width="1.6"/><path d="M1787.8 626.0L1796.5 634.7L1787.8 643.4000000000001L1779.1 634.7Z" fill="#ffd15c" stroke="#fff" stroke-width="1.6"/><path d="M1888 615.0999999999999L1896.7 623.8L1888 632.5L1879.3 623.8Z" fill="#ffd15c" stroke="#fff" stroke-width="1.6"/><path d="M1983.9 567.0999999999999L1992.6000000000001 575.8L1983.9 584.5L1975.2 575.8Z" fill="#ffd15c" stroke="#fff" stroke-width="1.6"/><path d="M2081.5 631.5999999999999L2090.2 640.3L2081.5 649.0L2072.8 640.3Z" fill="#ffd15c" stroke="#fff" stroke-width="1.6"/><path d="M2182.3 636.5999999999999L2191.0 645.3L2182.3 654.0L2173.6000000000004 645.3Z" fill="#ffd15c" stroke="#fff" stroke-width="1.6"/><path d="M1691.9 655.2 C1691.9 655.2 1749.4 651.2 1787.8 649.6 C1827.9 647.9 1847.9 649.6 1888.0 646.9 C1926.4 644.2 1945.5 625.4 1983.9 625.4 C2022.9 625.4 2042.5 641.0 2081.5 645.3 C2121.8 649.6 2182.3 649.6 2182.3 649.6" fill="none" stroke="#b9cf3d" stroke-width="4" stroke-linecap="round" stroke-linejoin="round"/><path d="M1691.9 646.5L1700.6000000000001 655.2L1691.9 663.9000000000001L1683.2 655.2Z" fill="#b9cf3d" stroke="#fff" stroke-width="1.6"/><path d="M1787.8 640.9L1796.5 649.6L1787.8 658.3000000000001L1779.1 649.6Z" fill="#b9cf3d" stroke="#fff" stroke-width="1.6"/><path d="M1888 638.1999999999999L1896.7 646.9L1888 655.6L1879.3 646.9Z" fill="#b9cf3d" stroke="#fff" stroke-width="1.6"/><path d="M1983.9 616.6999999999999L1992.6000000000001 625.4L1983.9 634.1L1975.2 625.4Z" fill="#b9cf3d" stroke="#fff" stroke-width="1.6"/><path d="M2081.5 636.5999999999999L2090.2 645.3L2081.5 654.0L2072.8 645.3Z" fill="#b9cf3d" stroke="#fff" stroke-width="1.6"/><path d="M2182.3 640.9L2191.0 649.6L2182.3 658.3000000000001L2173.6000000000004 649.6Z" fill="#b9cf3d" stroke="#fff" stroke-width="1.6"/><path d="M1691.9 661.8 C1691.9 661.8 1749.4 665.1 1787.8 665.1 C1827.9 665.1 1847.9 662.5 1888.0 659.5 C1926.4 656.6 1945.5 650.2 1983.9 650.2 C2022.9 650.2 2042.5 651.6 2081.5 653.5 C2121.8 655.5 2182.3 660.1 2182.3 660.1" fill="none" stroke="#1b9a33" stroke-width="4" stroke-linecap="round" stroke-linejoin="round"/><path d="M1691.9 653.0999999999999L1700.6000000000001 661.8L1691.9 670.5L1683.2 661.8Z" fill="#1b9a33" stroke="#fff" stroke-width="1.6"/><path d="M1787.8 656.4L1796.5 665.1L1787.8 673.8000000000001L1779.1 665.1Z" fill="#1b9a33" stroke="#fff" stroke-width="1.6"/><path d="M1888 650.8L1896.7 659.5L1888 668.2L1879.3 659.5Z" fill="#1b9a33" stroke="#fff" stroke-width="1.6"/><path d="M1983.9 641.5L1992.6000000000001 650.2L1983.9 658.9000000000001L1975.2 650.2Z" fill="#1b9a33" stroke="#fff" stroke-width="1.6"/><path d="M2081.5 644.8L2090.2 653.5L2081.5 662.2L2072.8 653.5Z" fill="#1b9a33" stroke="#fff" stroke-width="1.6"/><path d="M2182.3 651.4L2191.0 660.1L2182.3 668.8000000000001L2173.6000000000004 660.1Z" fill="#1b9a33" stroke="#fff" stroke-width="1.6"/></svg>
<div style="position:absolute;left:0;top:0;width:220px;height:2100px;background:#02202a;overflow:hidden"><div style="position:absolute;left:0px;top:0px;width:220px;height:120px;background:#00121a"></div><div style="position:absolute;top:35.0px;font-size:42.8px;line-height:1;color:#fff;white-space:nowrap;letter-spacing:1.98px;font-weight:bold;left:58.0px;">nave</div><svg style="position:absolute;left:60px;top:144.3px;overflow:visible" width="104" height="74" viewBox="0 0 104 74"><path d="M2 59 L15 59 L26 50 L33 50 L47 38.7 L56 40 L68 33.7 L78 33.7 L91 16 L100 16 L100 70 L2 70Z" fill="#7c8c91"/><path d="M2 62 L15 61.5 L27 55.5 L33 55.5 L39 50 L46 50 L56 46 L69 40 L79 40 L92 28 L100 26 L100 70 L2 70Z" fill="#a9b4b7"/><path d="M2 69 L15.5 67.5 L26 61.5 L37 61.5 L48 56 L55 55.5 L67 47 L82 48.8 L93 39 L100 37.7 L100 70 L2 70Z" fill="#e7e8e9"/><path d="M1 0V70" stroke="#b8c0c2" stroke-width="2"/></svg><div style="position:absolute;top:232.0px;font-size:24.2px;line-height:1;color:#fff;white-space:nowrap;letter-spacing:0.79px;left:15.0px;text-shadow:0 2px 0 rgba(255,255,255,0.27);">Cumulative Flow</div><div style="position:absolute;top:266.0px;font-size:24.2px;line-height:1;color:#fff;white-space:nowrap;letter-spacing:1.09px;left:61.0px;text-shadow:0 2px 0 rgba(255,255,255,0.27);">Diagram</div><div style="position:absolute;left:0px;top:320px;width:220px;height:200px;background:#1a363f"></div><svg style="position:absolute;left:60px;top:344.3px;overflow:visible" width="104" height="74" viewBox="0 0 104 74"><path d="M1 0V69.5H100" fill="none" stroke="#d3d8d9" stroke-width="1.35"/><circle cx="42.7" cy="15.9" r="1.25" fill="#fff"/><circle cx="56.7" cy="29.4" r="1.25" fill="#fff"/><circle cx="23.6" cy="33.1" r="1.25" fill="#fff"/><circle cx="36.9" cy="34.1" r="1.25" fill="#fff"/><circle cx="81.3" cy="33.7" r="1.25" fill="#fff"/><circle cx="12.1" cy="41.7" r="1.25" fill="#fff"/><circle cx="23.6" cy="47.0" r="1.25" fill="#fff"/><circle cx="60.3" cy="47.6" r="1.25" fill="#fff"/><circle cx="70.0" cy="48.4" r="1.25" fill="#fff"/><circle cx="80.2" cy="51.2" r="1.25" fill="#fff"/><circle cx="92.3" cy="47.6" r="1.25" fill="#fff"/><circle cx="9.9" cy="54.0" r="1.25" fill="#fff"/><circle cx="13.5" cy="56.0" r="1.25" fill="#fff"/><circle cx="29.4" cy="54.6" r="1.25" fill="#fff"/><circle cx="36.9" cy="54.0" r="1.25" fill="#fff"/><circle cx="44.2" cy="57.9" r="1.25" fill="#fff"/><circle cx="59.1" cy="58.1" r="1.25" fill="#fff"/><circle cx="75.0" cy="59.1" r="1.25" fill="#fff"/><circle cx="82.3" cy="59.1" r="1.25" fill="#fff"/><circle cx="90.1" cy="55.6" r="1.25" fill="#fff"/><circle cx="97.2" cy="60.9" r="1.25" fill="#fff"/><circle cx="3.6" cy="60.4" r="1.25" fill="#fff"/><circle cx="6.1" cy="59.1" r="1.25" fill="#fff"/><circle cx="8.1" cy="65.6" r="1.25" fill="#fff"/><circle cx="10.9" cy="62.5" r="1.25" fill="#fff"/><circle cx="12.4" cy="63.2" r="1.25" fill="#fff"/><circle cx="14.4" cy="60.7" r="1.25" fill="#fff"/><circle cx="17.4" cy="64.4" r="1.25" fill="#fff"/><circle cx="18.7" cy="64.2" r="1.25" fill="#fff"/><circle cx="21.4" cy="66.5" r="1.25" fill="#fff"/><circle cx="22.8" cy="66.1" r="1.25" fill="#fff"/><circle cx="26.2" cy="64.0" r="1.25" fill="#fff"/><circle cx="27.3" cy="65.7" r="1.25" fill="#fff"/><circle cx="29.8" cy="66.3" r="1.25" fill="#fff"/><circle cx="31.6" cy="65.8" r="1.25" fill="#fff"/><circle cx="33.8" cy="59.2" r="1.25" fill="#fff"/><circle cx="36.2" cy="65.0" r="1.25" fill="#fff"/><circle cx="38.6" cy="64.3" r="1.25" fill="#fff"/><circle cx="40.8" cy="59.8" r="1.25" fill="#fff"/><circle cx="42.2" cy="66.1" r="1.25" fill="#fff"/><circle cx="44.6" cy="65.3" r="1.25" fill="#fff"/><circle cx="46.5" cy="64.2" r="1.25" fill="#fff"/><circle cx="48.4" cy="62.1" r="1.25" fill="#fff"/><circle cx="51.4" cy="61.7" r="1.25" fill="#fff"/><circle cx="54.1" cy="64.9" r="1.25" fill="#fff"/><circle cx="54.9" cy="60.8" r="1.25" fill="#fff"/><circle cx="58.5" cy="64.0" r="1.25" fill="#fff"/><circle cx="59.6" cy="63.1" r="1.25" fill="#fff"/><circle cx="61.9" cy="59.6" r="1.25" fill="#fff"/><circle cx="63.7" cy="66.1" r="1.25" fill="#fff"/><circle cx="66.0" cy="62.2" r="1.25" fill="#fff"/><circle cx="67.7" cy="59.9" r="1.25" fill="#fff"/><circle cx="70.4" cy="66.0" r="1.25" fill="#fff"/><circle cx="72.9" cy="67.5" r="1.25" fill="#fff"/><circle cx="74.8" cy="61.7" r="1.25" fill="#fff"/><circle cx="76.4" cy="62.7" r="1.25" fill="#fff"/><circle cx="80.0" cy="60.1" r="1.25" fill="#fff"/><circle cx="81.5" cy="66.0" r="1.25" fill="#fff"/><circle cx="82.9" cy="65.5" r="1.25" fill="#fff"/><circle cx="85.6" cy="62.5" r="1.25" fill="#fff"/><circle cx="87.4" cy="66.5" r="1.25" fill="#fff"/><circle cx="89.6" cy="66.0" r="1.25" fill="#fff"/><circle cx="92.8" cy="62.5" r="1.25" fill="#fff"/><circle cx="93.6" cy="64.5" r="1.25" fill="#fff"/><circle cx="96.5" cy="62.3" r="1.25" fill="#fff"/></svg><div style="position:absolute;top:432.0px;font-size:24.2px;line-height:1;color:#fff;white-space:nowrap;letter-spacing:0.37px;left:48.5px;text-shadow:0 2px 0 rgba(255,255,255,0.27);">Cycle Time</div><div style="position:absolute;top:466.0px;font-size:24.2px;line-height:1;color:#fff;white-space:nowrap;letter-spacing:1.03px;left:47.0px;text-shadow:0 2px 0 rgba(255,255,255,0.27);">Scatterplot</div><svg style="position:absolute;left:60px;top:544.3px;overflow:visible" width="104" height="74" viewBox="0 0 104 74"><path d="M1 0V69.5H100" fill="none" stroke="#d3d8d9" stroke-width="1.35"/><rect x="7.5" y="8.1" width="6.5" height="60.5" fill="#f7f7f7"/><rect x="7.5" y="8.1" width="6.5" height="12" fill="#a9b4b7"/><rect x="7.5" y="55.2" width="6.5" height="13.4" fill="#a9b4b7"/><rect x="19.8" y="14.9" width="6.5" height="53.7" fill="#f7f7f7"/><rect x="19.8" y="14.9" width="6.5" height="12" fill="#a9b4b7"/><rect x="19.8" y="55.2" width="6.5" height="13.4" fill="#a9b4b7"/><rect x="31.9" y="10.9" width="6.5" height="57.7" fill="#f7f7f7"/><rect x="31.9" y="10.9" width="6.5" height="12" fill="#a9b4b7"/><rect x="31.9" y="55.2" width="6.5" height="13.4" fill="#a9b4b7"/><rect x="44.6" y="14.9" width="6.5" height="53.7" fill="#f7f7f7"/><rect x="44.6" y="14.9" width="6.5" height="12" fill="#a9b4b7"/><rect x="44.6" y="55.2" width="6.5" height="13.4" fill="#a9b4b7"/><rect x="56.9" y="23" width="6.5" height="45.6" fill="#f7f7f7"/><rect x="56.9" y="23" width="6.5" height="12" fill="#a9b4b7"/><rect x="56.9" y="55.2" width="6.5" height="13.4" fill="#a9b4b7"/><rect x="69.4" y="25" width="6.5" height="43.6" fill="#f7f7f7"/><rect x="69.4" y="25" width="6.5" height="12" fill="#a9b4b7"/><rect x="69.4" y="55.2" width="6.5" height="13.4" fill="#a9b4b7"/><rect x="81.9" y="27" width="6.5" height="41.6" fill="#f7f7f7"/><rect x="81.9" y="27" width="6.5" height="12" fill="#a9b4b7"/><rect x="81.9" y="55.2" width="6.5" height="13.4" fill="#a9b4b7"/></svg><div style="position:absolute;top:632.0px;font-size:24.2px;line-height:1;color:#fff;white-space:nowrap;letter-spacing:0.37px;left:48.5px;text-shadow:0 2px 0 rgba(255,255,255,0.27);">Cycle Time</div><div style="position:absolute;top:666.0px;font-size:24.2px;line-height:1;color:#fff;white-space:nowrap;letter-spacing:0.86px;left:10.5px;text-shadow:0 2px 0 rgba(255,255,255,0.27);">Breakdown Chart</div><svg style="position:absolute;left:60px;top:744.3px;overflow:visible" width="104" height="74" viewBox="0 0 104 74"><path d="M1 0V69.5H100" fill="none" stroke="#d3d8d9" stroke-width="1.35"/><rect x="1.60" y="52.1" width="2.7" height="16.9" fill="#e4e7e8"/><rect x="4.97" y="47.4" width="2.7" height="21.6" fill="#e4e7e8"/><rect x="8.34" y="20.6" width="2.7" height="48.4" fill="#e4e7e8"/><rect x="11.71" y="31.3" width="2.7" height="37.7" fill="#e4e7e8"/><rect x="15.08" y="42.2" width="2.7" height="26.8" fill="#e4e7e8"/><rect x="18.45" y="50.3" width="2.7" height="18.7" fill="#e4e7e8"/><rect x="21.82" y="55.1" width="2.7" height="13.9" fill="#e4e7e8"/><rect x="25.19" y="61.1" width="2.7" height="7.9" fill="#e4e7e8"/><rect x="28.56" y="55.1" width="2.7" height="13.9" fill="#e4e7e8"/><rect x="31.93" y="52.1" width="2.7" height="16.9" fill="#e4e7e8"/><rect x="35.30" y="47.4" width="2.7" height="21.6" fill="#e4e7e8"/><rect x="38.67" y="59.1" width="2.7" height="9.9" fill="#e4e7e8"/><rect x="48.20" y="56.5" width="2.7" height="12.5" fill="#e4e7e8"/><rect x="51.57" y="60.1" width="2.7" height="8.9" fill="#e4e7e8"/><rect x="54.94" y="62.1" width="2.7" height="6.9" fill="#e4e7e8"/><rect x="58.31" y="56.5" width="2.7" height="12.5" fill="#e4e7e8"/><rect x="61.68" y="58.1" width="2.7" height="10.9" fill="#e4e7e8"/><rect x="75.00" y="58.1" width="2.7" height="10.9" fill="#e4e7e8"/><rect x="78.37" y="60.7" width="2.7" height="8.3" fill="#e4e7e8"/><rect x="81.74" y="62.1" width="2.7" height="6.9" fill="#e4e7e8"/><rect x="85.11" y="64.0" width="2.7" height="5.0" fill="#e4e7e8"/><rect x="95.20" y="61.7" width="2.7" height="7.3" fill="#e4e7e8"/><rect x="98.57" y="63.0" width="2.7" height="6.0" fill="#e4e7e8"/></svg><div style="position:absolute;top:832.0px;font-size:24.2px;line-height:1;color:#fff;white-space:nowrap;letter-spacing:0.37px;left:48.5px;text-shadow:0 2px 0 rgba(255,255,255,0.27);">Cycle Time</div><div style="position:absolute;top:866.0px;font-size:24.2px;line-height:1;color:#fff;white-space:nowrap;letter-spacing:0.77px;left:51.8px;text-shadow:0 2px 0 rgba(255,255,255,0.27);">Histogram</div><svg style="position:absolute;left:60px;top:956.3px;overflow:visible" width="104" height="74" viewBox="0 0 104 74"><path d="M1.2 0V69.3H100M27 0V69M53.2 0V69M78.6 0V69" fill="none" stroke="#d3d8d9" stroke-width="1.35"/><circle cx="14.1" cy="40.7" r="1.35" fill="#fff"/><circle cx="14.1" cy="45.2" r="1.35" fill="#fff"/><circle cx="14.1" cy="54.2" r="1.35" fill="#fff"/><circle cx="14.1" cy="61.7" r="1.35" fill="#fff"/><circle cx="39.9" cy="31.3" r="1.35" fill="#fff"/><circle cx="39.9" cy="40.7" r="1.35" fill="#fff"/><circle cx="39.9" cy="59.1" r="1.35" fill="#fff"/><circle cx="65.5" cy="13.9" r="1.35" fill="#fff"/><circle cx="65.5" cy="53.2" r="1.35" fill="#fff"/><circle cx="65.5" cy="59.5" r="1.35" fill="#fff"/><circle cx="91.3" cy="37.3" r="1.35" fill="#fff"/><circle cx="91.3" cy="51.2" r="1.35" fill="#fff"/><circle cx="91.3" cy="56.2" r="1.35" fill="#fff"/><circle cx="91.3" cy="61.7" r="1.35" fill="#fff"/></svg><div style="position:absolute;top:1052.1px;font-size:24.2px;line-height:1;color:#fff;white-space:nowrap;letter-spacing:0.97px;left:41.2px;text-shadow:0 2px 0 rgba(255,255,255,0.27);">Aging Chart</div><svg style="position:absolute;left:60px;top:1144.3px;overflow:visible" width="104" height="74" viewBox="0 0 104 74"><path d="M1 0V69.5H100" fill="none" stroke="#d3d8d9" stroke-width="1.35"/><rect x="7.5" y="63.8" width="3.2" height="5.2" fill="#e4e7e8"/><rect x="12.7" y="57.9" width="3.2" height="11.1" fill="#e4e7e8"/><rect x="17.9" y="21.4" width="3.2" height="47.6" fill="#e4e7e8"/><rect x="22.8" y="33.7" width="3.2" height="35.3" fill="#e4e7e8"/><rect x="27.8" y="60.5" width="3.2" height="8.5" fill="#e4e7e8"/><rect x="41.7" y="56.1" width="3.2" height="12.9" fill="#e4e7e8"/><rect x="46.8" y="52.7" width="3.2" height="16.3" fill="#e4e7e8"/><rect x="51.6" y="20.2" width="3.2" height="48.8" fill="#e4e7e8"/><rect x="56.7" y="16.4" width="3.2" height="52.6" fill="#e4e7e8"/><rect x="61.5" y="48.8" width="3.2" height="20.2" fill="#e4e7e8"/><rect x="75.6" y="63.4" width="3.2" height="5.6" fill="#e4e7e8"/><rect x="80.6" y="57.9" width="3.2" height="11.1" fill="#e4e7e8"/><rect x="85.3" y="20.2" width="3.2" height="48.8" fill="#e4e7e8"/><rect x="90.3" y="53.1" width="3.2" height="15.9" fill="#e4e7e8"/><rect x="95.2" y="61.9" width="3.2" height="7.1" fill="#e4e7e8"/></svg><div style="position:absolute;top:1232.0px;font-size:24.2px;line-height:1;color:#fff;white-space:nowrap;letter-spacing:0.58px;left:18.8px;text-shadow:0 2px 0 rgba(255,255,255,0.27);">Throughput Run</div><div style="position:absolute;top:1266.0px;font-size:24.2px;line-height:1;color:#fff;white-space:nowrap;letter-spacing:1.08px;left:78.2px;text-shadow:0 2px 0 rgba(255,255,255,0.27);">Chart</div><svg style="position:absolute;left:60px;top:1344.3px;overflow:visible" width="104" height="74" viewBox="0 0 104 74"><path d="M1 0V69.5H100" fill="none" stroke="#d3d8d9" stroke-width="1.35"/><rect x="1.6" y="15.2" width="6.1" height="53.8" fill="#e4e7e8"/><rect x="8.5" y="38.8" width="6.1" height="30.2" fill="#e4e7e8"/><rect x="15.1" y="38.8" width="6.1" height="30.2" fill="#e4e7e8"/><rect x="21.8" y="49.2" width="6.1" height="19.8" fill="#e4e7e8"/><rect x="28.6" y="63.4" width="6.1" height="5.6" fill="#e4e7e8"/><rect x="35.3" y="57.5" width="6.1" height="11.5" fill="#e4e7e8"/><rect x="41.9" y="57.5" width="6.1" height="11.5" fill="#e4e7e8"/><rect x="48.6" y="57.5" width="6.1" height="11.5" fill="#e4e7e8"/><rect x="68.5" y="62.5" width="6.1" height="6.5" fill="#e4e7e8"/><rect x="75" y="65.4" width="6.1" height="3.6" fill="#e4e7e8"/><rect x="95.2" y="65.4" width="4.6" height="3.6" fill="#e4e7e8"/></svg><div style="position:absolute;top:1432.0px;font-size:24.2px;line-height:1;color:#fff;white-space:nowrap;letter-spacing:0.89px;left:44.1px;text-shadow:0 2px 0 rgba(255,255,255,0.27);">Throughput</div><div style="position:absolute;top:1466.0px;font-size:24.2px;line-height:1;color:#fff;white-space:nowrap;letter-spacing:0.77px;left:51.8px;text-shadow:0 2px 0 rgba(255,255,255,0.27);">Histogram</div><svg style="position:absolute;left:60px;top:1544.3px;overflow:visible" width="104" height="74" viewBox="0 0 104 74"><path d="M1 0V69.5H100" fill="none" stroke="#d3d8d9" stroke-width="1.35"/><rect x="8.1" y="58.7" width="2.9" height="10.3" fill="#e4e7e8"/><rect x="15.1" y="59.7" width="2.9" height="9.3" fill="#e4e7e8"/><rect x="18.3" y="10.9" width="2.9" height="58.1" fill="#e4e7e8"/><rect x="21.8" y="58.7" width="2.9" height="10.3" fill="#e4e7e8"/><rect x="25" y="64.4" width="2.9" height="4.6" fill="#e4e7e8"/><rect x="31.7" y="64.6" width="2.9" height="4.4" fill="#e4e7e8"/><rect x="34.9" y="62.5" width="2.9" height="6.5" fill="#e4e7e8"/><rect x="38.3" y="60.7" width="2.9" height="8.3" fill="#e4e7e8"/><rect x="41.7" y="50.2" width="2.9" height="18.8" fill="#e4e7e8"/><rect x="45" y="61.1" width="2.9" height="7.9" fill="#e4e7e8"/><rect x="55" y="64.4" width="2.9" height="4.6" fill="#e4e7e8"/><rect x="58.3" y="62.7" width="2.9" height="6.3" fill="#e4e7e8"/><rect x="68.8" y="64.4" width="2.9" height="4.6" fill="#e4e7e8"/><rect x="72" y="65.4" width="2.9" height="3.6" fill="#e4e7e8"/></svg><div style="position:absolute;top:1632.0px;font-size:24.2px;line-height:1;color:#fff;white-space:nowrap;letter-spacing:0.60px;left:25.3px;text-shadow:0 2px 0 rgba(255,255,255,0.27);">Flow Efficiency</div><div style="position:absolute;top:1666.0px;font-size:24.2px;line-height:1;color:#fff;white-space:nowrap;letter-spacing:1.08px;left:78.2px;text-shadow:0 2px 0 rgba(255,255,255,0.27);">Chart</div><svg style="position:absolute;left:60px;top:1726.3px;overflow:visible" width="104" height="74" viewBox="0 0 104 74"><path d="M1 0V69.5H100" fill="none" stroke="#d3d8d9" stroke-width="1.35"/><circle cx="8.9" cy="40.2" r="1.3" fill="#fff"/><circle cx="17.3" cy="34.2" r="1.3" fill="#fff"/><circle cx="16.7" cy="44.8" r="1.3" fill="#fff"/><circle cx="28.3" cy="39.5" r="1.3" fill="#fff"/><circle cx="33.2" cy="30.2" r="1.3" fill="#fff"/><circle cx="41.4" cy="35.5" r="1.3" fill="#fff"/><circle cx="51" cy="30.2" r="1.3" fill="#fff"/><circle cx="59" cy="21.8" r="1.3" fill="#fff"/><circle cx="68.5" cy="27.1" r="1.3" fill="#fff"/><circle cx="52.6" cy="44" r="1.3" fill="#fff"/><circle cx="62.8" cy="41.9" r="1.3" fill="#fff"/><circle cx="72.1" cy="45.9" r="1.3" fill="#fff"/><circle cx="80.8" cy="34.9" r="1.3" fill="#fff"/><circle cx="80.8" cy="45.9" r="1.3" fill="#fff"/><circle cx="42.5" cy="51.4" r="1.3" fill="#fff"/><circle cx="14" cy="56.7" r="1.3" fill="#fff"/><circle cx="22.6" cy="56.7" r="1.3" fill="#fff"/><circle cx="31.9" cy="56.7" r="1.3" fill="#fff"/><circle cx="55.4" cy="56.7" r="1.3" fill="#fff"/><path d="M1 55L100 23.3" stroke="#f2f2f2" stroke-width="1.3" stroke-dasharray="4.6 2" fill="none"/></svg><div style="position:absolute;top:1813.9px;font-size:24.2px;line-height:1;color:#fff;white-space:nowrap;letter-spacing:0.54px;left:57.0px;text-shadow:0 2px 0 rgba(255,255,255,0.27);">Due Date</div><div style="position:absolute;top:1847.9px;font-size:24.2px;line-height:1;color:#fff;white-space:nowrap;letter-spacing:0.70px;left:37.2px;text-shadow:0 2px 0 rgba(255,255,255,0.27);">Performance</div><div style="position:absolute;top:1881.9px;font-size:24.2px;line-height:1;color:#fff;white-space:nowrap;letter-spacing:1.08px;left:78.2px;text-shadow:0 2px 0 rgba(255,255,255,0.27);">Chart</div><svg style="position:absolute;left:60px;top:1944.3px;overflow:visible" width="104" height="74" viewBox="0 0 104 74"><path d="M1 0V69.5H100" fill="none" stroke="#d3d8d9" stroke-width="1.35"/><rect x="2.50" y="63.7" width="2.75" height="5.3" fill="#e4e7e8"/><rect x="5.92" y="57.4" width="2.75" height="11.6" fill="#e4e7e8"/><rect x="9.34" y="50.4" width="2.75" height="18.6" fill="#e4e7e8"/><rect x="12.76" y="42.6" width="2.75" height="26.4" fill="#e4e7e8"/><rect x="16.18" y="35.2" width="2.75" height="33.8" fill="#e4e7e8"/><rect x="19.60" y="28.4" width="2.75" height="40.6" fill="#e4e7e8"/><rect x="23.02" y="23.1" width="2.75" height="45.9" fill="#e4e7e8"/><rect x="26.44" y="18.5" width="2.75" height="50.5" fill="#e4e7e8"/><rect x="29.86" y="15.5" width="2.75" height="53.5" fill="#e4e7e8"/><rect x="33.28" y="13.0" width="2.75" height="56" fill="#e4e7e8"/><rect x="36.70" y="12.6" width="2.75" height="56.4" fill="#e4e7e8"/><rect x="40.12" y="14.7" width="2.75" height="54.3" fill="#e4e7e8"/><rect x="43.54" y="18.3" width="2.75" height="50.7" fill="#e4e7e8"/><rect x="46.96" y="22.9" width="2.75" height="46.1" fill="#e4e7e8"/><rect x="50.38" y="26.7" width="2.75" height="42.3" fill="#e4e7e8"/><rect x="53.80" y="32.4" width="2.75" height="36.6" fill="#e4e7e8"/><rect x="57.22" y="37.9" width="2.75" height="31.1" fill="#e4e7e8"/><rect x="60.64" y="43.2" width="2.75" height="25.8" fill="#e4e7e8"/><rect x="64.06" y="48.3" width="2.75" height="20.7" fill="#e4e7e8"/><rect x="67.48" y="52.5" width="2.75" height="16.5" fill="#e4e7e8"/><rect x="70.90" y="56.3" width="2.75" height="12.7" fill="#e4e7e8"/><rect x="74.32" y="59.1" width="2.75" height="9.9" fill="#e4e7e8"/><rect x="77.74" y="61.0" width="2.75" height="8" fill="#e4e7e8"/><rect x="81.16" y="63.3" width="2.75" height="5.7" fill="#e4e7e8"/><rect x="84.58" y="64.3" width="2.75" height="4.7" fill="#e4e7e8"/><rect x="88.00" y="65.4" width="2.75" height="3.6" fill="#e4e7e8"/><rect x="91.42" y="66.0" width="2.75" height="3" fill="#e4e7e8"/><rect x="94.84" y="67.1" width="2.75" height="1.9" fill="#e4e7e8"/></svg><div style="position:absolute;top:2032.0px;font-size:24.2px;line-height:1;color:#fff;white-space:nowrap;letter-spacing:0.63px;left:37.2px;text-shadow:0 2px 0 rgba(255,255,255,0.27);">Monte Carlo:</div><div style="position:absolute;top:2066.0px;font-size:24.2px;line-height:1;color:#fff;white-space:nowrap;letter-spacing:0.65px;left:33.5px;text-shadow:0 2px 0 rgba(255,255,255,0.27);">Delivery Date</div></div>
<div style="position:absolute;left:2840px;top:0px;width:520px;height:2100px;background:#fcfcfc"></div><div style="position:absolute;left:2840px;top:0px;width:520px;height:118px;background:#00506c"></div><div style="position:absolute;left:2840px;top:1096px;width:520px;height:117.5px;background:#00506c"></div><div style="position:absolute;left:2840px;top:120.5px;width:8px;height:193.0px;background:#0a4f6f"></div><div style="position:absolute;left:2840px;top:316.5px;width:8px;height:483.0px;background:#0a4f6f"></div><div style="position:absolute;left:2840px;top:802.5px;width:8px;height:291.5px;background:#0a4f6f"></div><div style="position:absolute;left:2840px;top:1215.5px;width:8px;height:658.0px;background:#0a4f6f"></div><div style="position:absolute;left:2840px;top:1876.5px;width:8px;height:223.5px;background:#0a4f6f"></div><div style="position:absolute;left:2848px;top:314px;width:512px;height:2px;background:#e7e7e7"></div><div style="position:absolute;left:2848px;top:800px;width:512px;height:2px;background:#e7e7e7"></div><div style="position:absolute;left:2848px;top:1874px;width:512px;height:2px;background:#e7e7e7"></div><svg style="position:absolute;left:2840px;top:0" width="520" height="2100" viewBox="2840 0 520 2100"><path d="M2876.35 57.0 L2889.6 71.0 L2902.85 57.0" fill="none" stroke="#fff" stroke-width="4" stroke-linecap="butt" stroke-linejoin="miter"/><path d="M2876.35 1152.5 L2889.6 1166.5 L2902.85 1152.5" fill="none" stroke="#fff" stroke-width="4" stroke-linecap="butt" stroke-linejoin="miter"/><path d="M2876.35 175.0 L2889.6 189.0 L2902.85 175.0" fill="none" stroke="#222" stroke-width="4" stroke-linecap="butt" stroke-linejoin="miter"/><path d="M2876.35 371.3 L2889.6 385.3 L2902.85 371.3" fill="none" stroke="#222" stroke-width="4" stroke-linecap="butt" stroke-linejoin="miter"/><path d="M2876.35 856.5 L2889.6 870.5 L2902.85 856.5" fill="none" stroke="#222" stroke-width="4" stroke-linecap="butt" stroke-linejoin="miter"/><path d="M2876.35 1270.5 L2889.6 1284.5 L2902.85 1270.5" fill="none" stroke="#222" stroke-width="4" stroke-linecap="butt" stroke-linejoin="miter"/><path d="M2876.35 1931.4 L2889.6 1945.4 L2902.85 1931.4" fill="none" stroke="#222" stroke-width="4" stroke-linecap="butt" stroke-linejoin="miter"/><circle cx="2981.8" cy="2064" r="10" fill="#f0837a"/></svg><div style="position:absolute;top:42.5px;font-size:32px;line-height:1;color:#fff;white-space:nowrap;letter-spacing:-0.79px;font-weight:bold;left:2928.5px;">Controls</div><div style="position:absolute;top:1139.2px;font-size:32px;line-height:1;color:#fff;white-space:nowrap;letter-spacing:-1.07px;font-weight:bold;left:2928.5px;">Filters</div><div style="position:absolute;top:161.0px;font-size:32px;line-height:1;color:#4a4a4a;white-space:nowrap;letter-spacing:-0.78px;font-weight:bold;left:2928.5px;">Trendline</div><div style="position:absolute;top:358.1px;font-size:32px;line-height:1;color:#4a4a4a;white-space:nowrap;letter-spacing:-0.78px;font-weight:bold;left:2928.5px;">Percentiles</div><div style="position:absolute;top:843.1px;font-size:32px;line-height:1;color:#4a4a4a;white-space:nowrap;letter-spacing:-0.63px;font-weight:bold;left:2928.5px;">Group by</div><div style="position:absolute;top:1261.4px;font-size:32px;line-height:1;color:#4a4a4a;white-space:nowrap;letter-spacing:-2.17px;font-weight:bold;left:2928.5px;">Lists</div><div style="position:absolute;top:1921.4px;font-size:32px;line-height:1;color:#4a4a4a;white-space:nowrap;letter-spacing:-0.88px;font-weight:bold;left:2928.5px;">Labels</div><div style="position:absolute;left:2928.1px;top:236.3px;width:27.6px;height:27.6px;box-sizing:border-box;border:2.4px solid #454545;border-radius:4.5px;background:#fff"></div><svg style="position:absolute;left:2928.1px;top:236.3px" width="27.6" height="27.6" viewBox="0 0 27.6 27.6"><path d="M6 14.8L11.2 20.4L21.6 7" fill="none" stroke="#454545" stroke-width="3.4" stroke-linecap="round" stroke-linejoin="miter"/></svg><div style="position:absolute;top:236.3px;font-size:27px;line-height:1;color:#3a3a3a;white-space:nowrap;letter-spacing:1.32px;left:2973.0px;">Enabled</div><div style="position:absolute;left:2928.1px;top:432.1px;width:27.6px;height:27.6px;box-sizing:border-box;border:2.4px solid #454545;border-radius:4.5px;background:#fff"></div><svg style="position:absolute;left:2928.1px;top:432.1px" width="27.6" height="27.6" viewBox="0 0 27.6 27.6"><path d="M6 14.8L11.2 20.4L21.6 7" fill="none" stroke="#454545" stroke-width="3.4" stroke-linecap="round" stroke-linejoin="miter"/></svg><div style="position:absolute;top:432.1px;font-size:27px;line-height:1;color:#3a3a3a;white-space:nowrap;letter-spacing:1.05px;left:2973.0px;">Select all</div><div style="position:absolute;left:2928.1px;top:490.1px;width:27.6px;height:27.6px;box-sizing:border-box;border:2.4px solid #454545;border-radius:4.5px;background:#fff"></div><svg style="position:absolute;left:2928.1px;top:490.1px" width="27.6" height="27.6" viewBox="0 0 27.6 27.6"><path d="M6 14.8L11.2 20.4L21.6 7" fill="none" stroke="#454545" stroke-width="3.4" stroke-linecap="round" stroke-linejoin="miter"/></svg><div style="position:absolute;top:490.1px;font-size:27px;line-height:1;color:#3a3a3a;white-space:nowrap;letter-spacing:2.43px;left:2973.0px;">30%</div><div style="position:absolute;left:2928.1px;top:548.1px;width:27.6px;height:27.6px;box-sizing:border-box;border:2.4px solid #454545;border-radius:4.5px;background:#fff"></div><svg style="position:absolute;left:2928.1px;top:548.1px" width="27.6" height="27.6" viewBox="0 0 27.6 27.6"><path d="M6 14.8L11.2 20.4L21.6 7" fill="none" stroke="#454545" stroke-width="3.4" stroke-linecap="round" stroke-linejoin="miter"/></svg><div style="position:absolute;top:548.1px;font-size:27px;line-height:1;color:#3a3a3a;white-space:nowrap;letter-spacing:2.43px;left:2973.0px;">50%</div><div style="position:absolute;left:2928.1px;top:606.1px;width:27.6px;height:27.6px;box-sizing:border-box;border:2.4px solid #454545;border-radius:4.5px;background:#fff"></div><svg style="position:absolute;left:2928.1px;top:606.1px" width="27.6" height="27.6" viewBox="0 0 27.6 27.6"><path d="M6 14.8L11.2 20.4L21.6 7" fill="none" stroke="#454545" stroke-width="3.4" stroke-linecap="round" stroke-linejoin="miter"/></svg><div style="position:absolute;top:606.1px;font-size:27px;line-height:1;color:#3a3a3a;white-space:nowrap;letter-spacing:2.23px;left:2973.0px;">70%</div><div style="position:absolute;left:2928.1px;top:664.1px;width:27.6px;height:27.6px;box-sizing:border-box;border:2.4px solid #454545;border-radius:4.5px;background:#fff"></div><svg style="position:absolute;left:2928.1px;top:664.1px" width="27.6" height="27.6" viewBox="0 0 27.6 27.6"><path d="M6 14.8L11.2 20.4L21.6 7" fill="none" stroke="#454545" stroke-width="3.4" stroke-linecap="round" stroke-linejoin="miter"/></svg><div style="position:absolute;top:664.1px;font-size:27px;line-height:1;color:#3a3a3a;white-space:nowrap;letter-spacing:2.23px;left:2973.0px;">85%</div><div style="position:absolute;left:2928.1px;top:722.1px;width:27.6px;height:27.6px;box-sizing:border-box;border:2.4px solid #454545;border-radius:4.5px;background:#fff"></div><svg style="position:absolute;left:2928.1px;top:722.1px" width="27.6" height="27.6" viewBox="0 0 27.6 27.6"><path d="M6 14.8L11.2 20.4L21.6 7" fill="none" stroke="#454545" stroke-width="3.4" stroke-linecap="round" stroke-linejoin="miter"/></svg><div style="position:absolute;top:722.1px;font-size:27px;line-height:1;color:#3a3a3a;white-space:nowrap;letter-spacing:2.23px;left:2973.0px;">95%</div><div style="position:absolute;left:2928.1px;top:909.9px;width:27.6px;height:27.6px;box-sizing:border-box;border:2.3px solid #454545;border-radius:50%;background:#fff"></div><div style="position:absolute;left:2934px;top:915.8px;width:15.8px;height:15.8px;border-radius:50%;background:#454545"></div><div style="position:absolute;top:909.8px;font-size:27px;line-height:1;color:#3a3a3a;white-space:nowrap;letter-spacing:1.34px;left:2973.0px;">Day</div><div style="position:absolute;left:2928.1px;top:968.1px;width:27.6px;height:27.6px;box-sizing:border-box;border:2.3px solid #454545;border-radius:50%;background:#fff"></div><div style="position:absolute;top:968.0px;font-size:27px;line-height:1;color:#3a3a3a;white-space:nowrap;letter-spacing:1.12px;left:2973.0px;">Week</div><div style="position:absolute;left:2928.1px;top:1026.2px;width:27.6px;height:27.6px;box-sizing:border-box;border:2.3px solid #454545;border-radius:50%;background:#fff"></div><div style="position:absolute;top:1026.1px;font-size:27px;line-height:1;color:#3a3a3a;white-space:nowrap;letter-spacing:2.06px;left:2973.0px;">Month</div><div style="position:absolute;left:2928.1px;top:1332.1px;width:27.6px;height:27.6px;box-sizing:border-box;border:2.4px solid #454545;border-radius:4.5px;background:#fff"></div><div style="position:absolute;top:1332.1px;font-size:27px;line-height:1;color:#3a3a3a;white-space:nowrap;letter-spacing:1.05px;left:2973.0px;">Select all</div><div style="position:absolute;left:2928.1px;top:1390.1px;width:27.6px;height:27.6px;box-sizing:border-box;border:2.4px solid #454545;border-radius:4.5px;background:#fff"></div><div style="position:absolute;top:1390.1px;font-size:27px;line-height:1;color:#3a3a3a;white-space:nowrap;letter-spacing:1.24px;left:2973.0px;">To do</div><div style="position:absolute;left:2928.1px;top:1447.9px;width:27.6px;height:27.6px;box-sizing:border-box;border:2.4px solid #454545;border-radius:4.5px;background:#fff"></div><svg style="position:absolute;left:2928.1px;top:1447.9px" width="27.6" height="27.6" viewBox="0 0 27.6 27.6"><path d="M6 14.8L11.2 20.4L21.6 7" fill="none" stroke="#454545" stroke-width="3.4" stroke-linecap="round" stroke-linejoin="miter"/></svg><div style="position:absolute;top:1447.9px;font-size:27px;line-height:1;color:#3a3a3a;white-space:nowrap;letter-spacing:1.57px;left:2973.0px;">Development</div><div style="position:absolute;left:2928.1px;top:1505.9px;width:27.6px;height:27.6px;box-sizing:border-box;border:2.4px solid #454545;border-radius:4.5px;background:#fff"></div><svg style="position:absolute;left:2928.1px;top:1505.9px" width="27.6" height="27.6" viewBox="0 0 27.6 27.6"><path d="M6 14.8L11.2 20.4L21.6 7" fill="none" stroke="#454545" stroke-width="3.4" stroke-linecap="round" stroke-linejoin="miter"/></svg><div style="position:absolute;top:1505.9px;font-size:27px;line-height:1;color:#3a3a3a;white-space:nowrap;letter-spacing:1.18px;left:2973.0px;">Code review</div><div style="position:absolute;left:2928.1px;top:1563.9px;width:27.6px;height:27.6px;box-sizing:border-box;border:2.4px solid #454545;border-radius:4.5px;background:#fff"></div><svg style="position:absolute;left:2928.1px;top:1563.9px" width="27.6" height="27.6" viewBox="0 0 27.6 27.6"><path d="M6 14.8L11.2 20.4L21.6 7" fill="none" stroke="#454545" stroke-width="3.4" stroke-linecap="round" stroke-linejoin="miter"/></svg><div style="position:absolute;top:1563.9px;font-size:27px;line-height:1;color:#3a3a3a;white-space:nowrap;letter-spacing:1.02px;left:2973.0px;">Code review (Done)</div><div style="position:absolute;left:2928.1px;top:1622.1px;width:27.6px;height:27.6px;box-sizing:border-box;border:2.4px solid #454545;border-radius:4.5px;background:#fff"></div><svg style="position:absolute;left:2928.1px;top:1622.1px" width="27.6" height="27.6" viewBox="0 0 27.6 27.6"><path d="M6 14.8L11.2 20.4L21.6 7" fill="none" stroke="#454545" stroke-width="3.4" stroke-linecap="round" stroke-linejoin="miter"/></svg><div style="position:absolute;top:1622.1px;font-size:27px;line-height:1;color:#3a3a3a;white-space:nowrap;letter-spacing:1.08px;left:2973.0px;">Testing</div><div style="position:absolute;left:2928.1px;top:1680.1px;width:27.6px;height:27.6px;box-sizing:border-box;border:2.4px solid #454545;border-radius:4.5px;background:#fff"></div><svg style="position:absolute;left:2928.1px;top:1680.1px" width="27.6" height="27.6" viewBox="0 0 27.6 27.6"><path d="M6 14.8L11.2 20.4L21.6 7" fill="none" stroke="#454545" stroke-width="3.4" stroke-linecap="round" stroke-linejoin="miter"/></svg><div style="position:absolute;top:1680.1px;font-size:27px;line-height:1;color:#3a3a3a;white-space:nowrap;letter-spacing:0.92px;left:2973.0px;">Testing (Done)</div><div style="position:absolute;left:2928.1px;top:1738.1px;width:27.6px;height:27.6px;box-sizing:border-box;border:2.4px solid #454545;border-radius:4.5px;background:#fff"></div><svg style="position:absolute;left:2928.1px;top:1738.1px" width="27.6" height="27.6" viewBox="0 0 27.6 27.6"><path d="M6 14.8L11.2 20.4L21.6 7" fill="none" stroke="#454545" stroke-width="3.4" stroke-linecap="round" stroke-linejoin="miter"/></svg><div style="position:absolute;top:1738.1px;font-size:27px;line-height:1;color:#3a3a3a;white-space:nowrap;letter-spacing:1.77px;left:2973.0px;">Deployment</div><div style="position:absolute;left:2928.1px;top:1796.1px;width:27.6px;height:27.6px;box-sizing:border-box;border:2.4px solid #454545;border-radius:4.5px;background:#fff"></div><svg style="position:absolute;left:2928.1px;top:1796.1px" width="27.6" height="27.6" viewBox="0 0 27.6 27.6"><path d="M6 14.8L11.2 20.4L21.6 7" fill="none" stroke="#454545" stroke-width="3.4" stroke-linecap="round" stroke-linejoin="miter"/></svg><div style="position:absolute;top:1796.1px;font-size:27px;line-height:1;color:#3a3a3a;white-space:nowrap;letter-spacing:1.35px;left:2973.0px;">Done</div><div style="position:absolute;left:2928.1px;top:1991.8px;width:27.6px;height:27.6px;box-sizing:border-box;border:2.4px solid #454545;border-radius:4.5px;background:#fff"></div><svg style="position:absolute;left:2928.1px;top:1991.8px" width="27.6" height="27.6" viewBox="0 0 27.6 27.6"><path d="M6 14.8L11.2 20.4L21.6 7" fill="none" stroke="#454545" stroke-width="3.4" stroke-linecap="round" stroke-linejoin="miter"/></svg><div style="position:absolute;top:1991.8px;font-size:27px;line-height:1;color:#3a3a3a;white-space:nowrap;letter-spacing:1.05px;left:2973.0px;">Select all</div><div style="position:absolute;left:2928.1px;top:2050.4px;width:27.6px;height:27.6px;box-sizing:border-box;border:2.4px solid #454545;border-radius:4.5px;background:#fff"></div><svg style="position:absolute;left:2928.1px;top:2050.4px" width="27.6" height="27.6" viewBox="0 0 27.6 27.6"><path d="M6 14.8L11.2 20.4L21.6 7" fill="none" stroke="#454545" stroke-width="3.4" stroke-linecap="round" stroke-linejoin="miter"/></svg><div style="position:absolute;top:2050.4px;font-size:27px;line-height:1;color:#3a3a3a;white-space:nowrap;letter-spacing:1.22px;left:3005.0px;">Expedite</div><div style="position:absolute;left:3184px;top:1924px;width:104px;height:104px;border-radius:13px;background:#555;box-shadow:0 6px 14px rgba(0,0,0,0.35)"></div><svg style="position:absolute;left:3184px;top:1924px" width="104" height="104" viewBox="0 0 104 104"><ellipse cx="52.3" cy="50" rx="24.8" ry="20" fill="#fff"/><path d="M38 60 C40 68 38 73 33 76 C42 76 50 72 54 66Z" fill="#fff"/></svg>
</div></body></html>
